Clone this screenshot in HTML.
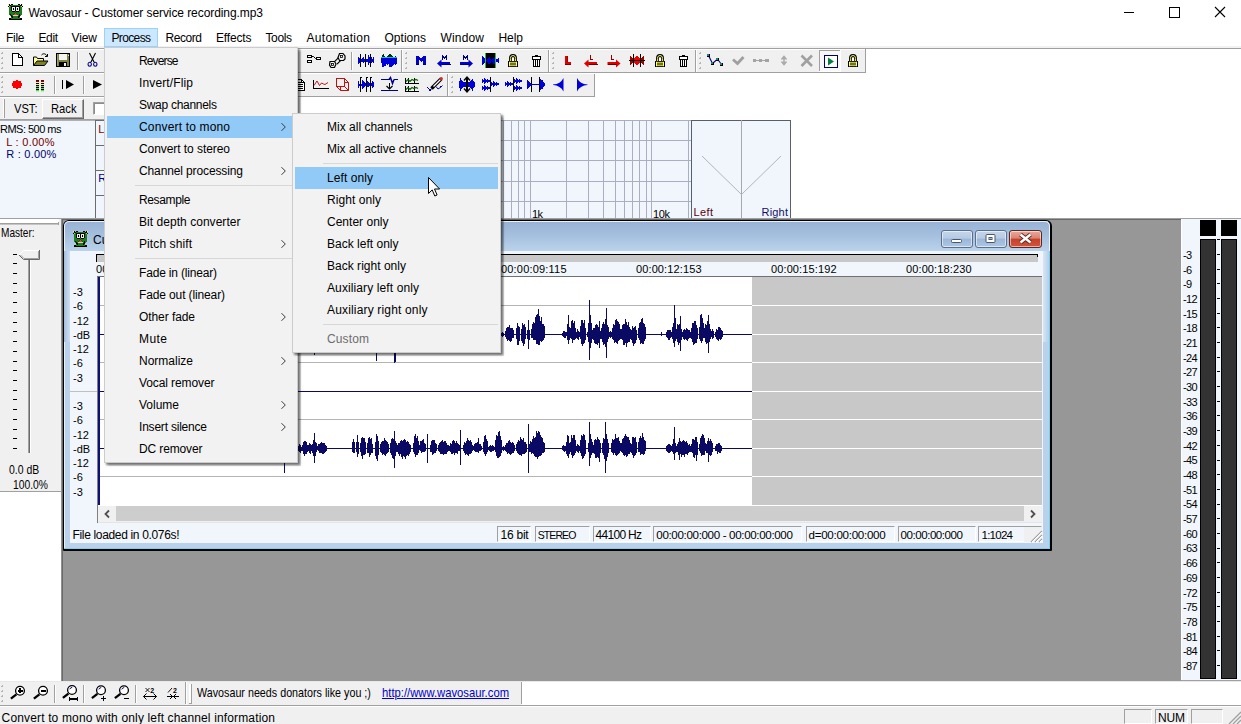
<!DOCTYPE html>
<html lang="en"><head><meta charset="utf-8"><title>Wavosaur - Customer service recording.mp3</title>
<style>
html,body{margin:0;padding:0;}
body{width:1241px;height:724px;overflow:hidden;background:#fff;position:relative;font-family:"Liberation Sans",sans-serif;}
#app{position:absolute;left:0;top:0;width:1241px;height:724px;overflow:hidden;background:#fff;}
#app div,#app span.t,#app svg{position:absolute;}
span.t{white-space:nowrap;line-height:20px;height:20px;display:block;}
svg{overflow:visible;}
.cr{shape-rendering:crispEdges;}
</style></head><body><div id="app">
<svg style="left:0px;top:0px" width="1241" height="49" viewBox="0 0 1241 49" ><g class="cr" transform="translate(8,4)"><rect x="0" y="0" width="1" height="1" fill="#f4f070"/><rect x="1" y="0" width="1" height="1" fill="#000"/><rect x="3" y="0" width="2" height="1" fill="#000"/><rect x="10" y="0" width="2" height="1" fill="#000"/><rect x="13" y="0" width="1" height="1" fill="#000"/><rect x="14" y="0" width="1" height="1" fill="#f4f070"/><rect x="1" y="1" width="2" height="1" fill="#000"/><rect x="3" y="1" width="9" height="1" fill="#1b7d1b"/><rect x="12" y="1" width="2" height="1" fill="#000"/><rect x="0" y="2" width="1" height="1" fill="#000"/><rect x="1" y="2" width="1" height="1" fill="#a0e040"/><rect x="2" y="2" width="1" height="1" fill="#1b7d1b"/><rect x="3" y="2" width="9" height="1" fill="#000"/><rect x="12" y="2" width="1" height="1" fill="#1b7d1b"/><rect x="13" y="2" width="1" height="1" fill="#a0e040"/><rect x="14" y="2" width="1" height="1" fill="#000"/><rect x="1" y="3" width="2" height="1" fill="#1b7d1b"/><rect x="3" y="3" width="1" height="1" fill="#000"/><rect x="4" y="3" width="3" height="1" fill="#e8f0e8"/><rect x="7" y="3" width="1" height="1" fill="#000"/><rect x="8" y="3" width="3" height="1" fill="#e8f0e8"/><rect x="11" y="3" width="1" height="1" fill="#000"/><rect x="12" y="3" width="2" height="1" fill="#1b7d1b"/><rect x="1" y="4" width="2" height="1" fill="#1b7d1b"/><rect x="3" y="4" width="1" height="1" fill="#000"/><rect x="4" y="4" width="1" height="1" fill="#e8f0e8"/><rect x="5" y="4" width="1" height="1" fill="#000"/><rect x="6" y="4" width="1" height="1" fill="#e8f0e8"/><rect x="7" y="4" width="1" height="1" fill="#000"/><rect x="8" y="4" width="1" height="1" fill="#e8f0e8"/><rect x="9" y="4" width="1" height="1" fill="#000"/><rect x="10" y="4" width="1" height="1" fill="#e8f0e8"/><rect x="11" y="4" width="1" height="1" fill="#000"/><rect x="12" y="4" width="2" height="1" fill="#1b7d1b"/><rect x="1" y="5" width="2" height="1" fill="#1b7d1b"/><rect x="3" y="5" width="1" height="1" fill="#000"/><rect x="4" y="5" width="1" height="1" fill="#e8f0e8"/><rect x="5" y="5" width="1" height="1" fill="#000"/><rect x="6" y="5" width="1" height="1" fill="#e8f0e8"/><rect x="7" y="5" width="1" height="1" fill="#000"/><rect x="8" y="5" width="1" height="1" fill="#e8f0e8"/><rect x="9" y="5" width="1" height="1" fill="#000"/><rect x="10" y="5" width="1" height="1" fill="#e8f0e8"/><rect x="11" y="5" width="1" height="1" fill="#000"/><rect x="12" y="5" width="2" height="1" fill="#1b7d1b"/><rect x="1" y="6" width="2" height="1" fill="#1b7d1b"/><rect x="3" y="6" width="1" height="1" fill="#000"/><rect x="4" y="6" width="3" height="1" fill="#e8f0e8"/><rect x="7" y="6" width="1" height="1" fill="#000"/><rect x="8" y="6" width="3" height="1" fill="#e8f0e8"/><rect x="11" y="6" width="1" height="1" fill="#000"/><rect x="12" y="6" width="2" height="1" fill="#1b7d1b"/><rect x="1" y="7" width="3" height="1" fill="#1b7d1b"/><rect x="4" y="7" width="3" height="1" fill="#000"/><rect x="7" y="7" width="1" height="1" fill="#1b7d1b"/><rect x="8" y="7" width="3" height="1" fill="#000"/><rect x="11" y="7" width="3" height="1" fill="#1b7d1b"/><rect x="1" y="8" width="6" height="1" fill="#1b7d1b"/><rect x="7" y="8" width="1" height="1" fill="#0f5f0f"/><rect x="8" y="8" width="6" height="1" fill="#1b7d1b"/><rect x="1" y="9" width="5" height="1" fill="#1b7d1b"/><rect x="6" y="9" width="1" height="1" fill="#0f5f0f"/><rect x="7" y="9" width="1" height="1" fill="#d05038"/><rect x="8" y="9" width="1" height="1" fill="#0f5f0f"/><rect x="9" y="9" width="5" height="1" fill="#1b7d1b"/><rect x="1" y="10" width="1" height="1" fill="#1b7d1b"/><rect x="2" y="10" width="1" height="1" fill="#000"/><rect x="3" y="10" width="2" height="1" fill="#1b7d1b"/><rect x="5" y="10" width="1" height="1" fill="#0f5f0f"/><rect x="6" y="10" width="3" height="1" fill="#d05038"/><rect x="9" y="10" width="1" height="1" fill="#0f5f0f"/><rect x="10" y="10" width="1" height="1" fill="#1b7d1b"/><rect x="11" y="10" width="1" height="1" fill="#000"/><rect x="12" y="10" width="2" height="1" fill="#1b7d1b"/><rect x="2" y="11" width="1" height="1" fill="#1b7d1b"/><rect x="3" y="11" width="1" height="1" fill="#000"/><rect x="4" y="11" width="1" height="1" fill="#1b7d1b"/><rect x="5" y="11" width="5" height="1" fill="#f0c4b4"/><rect x="10" y="11" width="1" height="1" fill="#1b7d1b"/><rect x="11" y="11" width="1" height="1" fill="#000"/><rect x="12" y="11" width="1" height="1" fill="#1b7d1b"/><rect x="3" y="12" width="2" height="1" fill="#000"/><rect x="5" y="12" width="5" height="1" fill="#1b7d1b"/><rect x="10" y="12" width="2" height="1" fill="#000"/><rect x="3" y="13" width="1" height="1" fill="#1b7d1b"/><rect x="4" y="13" width="1" height="1" fill="#000"/><rect x="5" y="13" width="5" height="1" fill="#1b7d1b"/><rect x="10" y="13" width="1" height="1" fill="#000"/><rect x="11" y="13" width="1" height="1" fill="#1b7d1b"/><rect x="1" y="14" width="2" height="1" fill="#000"/><rect x="3" y="14" width="9" height="1" fill="#1b7d1b"/><rect x="12" y="14" width="2" height="1" fill="#000"/><rect x="1" y="15" width="13" height="1" fill="#000"/></g></svg>
<span class="t " style="left:28.40px;top:2.54px;font-size:12px;letter-spacing:-0.076px;color:#000;">Wavosaur - Customer service recording.mp3</span>
<svg style="left:1100px;top:0px" width="141" height="30" viewBox="0 0 141 30" ><g class="cr" fill="none" stroke="#000" stroke-width="1"><path d="M24 12.5H34"/><rect x="69.5" y="7.5" width="10" height="10"/></g><path d="M115 7L125 17M125 7L115 17" stroke="#000" stroke-width="1.1" fill="none"/></svg>
<div style="left:0px;top:46px;width:1241px;height:2px;background:#f2f2f2;"></div>
<div style="left:104px;top:28px;width:54px;height:19px;background:#cce8ff;box-sizing:border-box;border:1px solid #99d1ff;"></div>
<span class="t " style="left:6.00px;top:28.04px;font-size:12px;letter-spacing:-0.279px;color:#000;">File</span>
<span class="t " style="left:38.50px;top:28.04px;font-size:12px;letter-spacing:-0.393px;color:#000;">Edit</span>
<span class="t " style="left:71.50px;top:28.04px;font-size:12px;letter-spacing:-0.098px;color:#000;">View</span>
<span class="t " style="left:111.50px;top:28.04px;font-size:12px;letter-spacing:-0.641px;color:#000;">Process</span>
<span class="t " style="left:165.50px;top:28.04px;font-size:12px;letter-spacing:-0.437px;color:#000;">Record</span>
<span class="t " style="left:216.00px;top:28.04px;font-size:12px;letter-spacing:-0.160px;color:#000;">Effects</span>
<span class="t " style="left:265.50px;top:28.04px;font-size:12px;letter-spacing:-0.378px;color:#000;">Tools</span>
<span class="t " style="left:306.50px;top:28.04px;font-size:12px;letter-spacing:0.311px;color:#000;">Automation</span>
<span class="t " style="left:384.50px;top:28.04px;font-size:12px;letter-spacing:0.024px;color:#000;">Options</span>
<span class="t " style="left:440.50px;top:28.04px;font-size:12px;letter-spacing:0.164px;color:#000;">Window</span>
<span class="t " style="left:498.50px;top:28.04px;font-size:12px;letter-spacing:-0.060px;color:#000;">Help</span>
<div style="left:0px;top:48px;width:1241px;height:1px;background:#a0a0a0;"></div>
<div style="left:0px;top:50px;width:866px;height:23px;background:#f0f0f0;"></div>
<div style="left:0px;top:72px;width:866px;height:1px;background:#a0a0a0;"></div>
<div style="left:865px;top:49px;width:1px;height:24px;background:#a0a0a0;"></div>
<div style="left:0px;top:73px;width:595px;height:24px;background:#f0f0f0;"></div>
<div style="left:0px;top:96px;width:595px;height:1px;background:#a0a0a0;"></div>
<div style="left:594px;top:73px;width:1px;height:24px;background:#a0a0a0;"></div>
<div style="left:0px;top:73px;width:595px;height:1px;background:#fff;"></div>
<div style="left:0px;top:97px;width:300px;height:23px;background:#f0f0f0;"></div>
<div style="left:0px;top:97px;width:300px;height:1px;background:#fff;"></div>
<div style="left:0px;top:119px;width:300px;height:1px;background:#a0a0a0;"></div>
<svg style="left:0px;top:0px" width="1241" height="124" viewBox="0 0 1241 124" ><rect x="2" y="52" width="1" height="1" fill="#b4b4b4"/><rect x="1" y="53" width="2" height="1" fill="#b4b4b4"/><rect x="2" y="57" width="1" height="1" fill="#b4b4b4"/><rect x="1" y="58" width="2" height="1" fill="#b4b4b4"/><rect x="2" y="62" width="1" height="1" fill="#b4b4b4"/><rect x="1" y="63" width="2" height="1" fill="#b4b4b4"/><rect x="2" y="67" width="1" height="1" fill="#b4b4b4"/><rect x="1" y="68" width="2" height="1" fill="#b4b4b4"/><rect x="406" y="52" width="1" height="1" fill="#b4b4b4"/><rect x="405" y="53" width="2" height="1" fill="#b4b4b4"/><rect x="406" y="57" width="1" height="1" fill="#b4b4b4"/><rect x="405" y="58" width="2" height="1" fill="#b4b4b4"/><rect x="406" y="62" width="1" height="1" fill="#b4b4b4"/><rect x="405" y="63" width="2" height="1" fill="#b4b4b4"/><rect x="406" y="67" width="1" height="1" fill="#b4b4b4"/><rect x="405" y="68" width="2" height="1" fill="#b4b4b4"/><rect x="553" y="52" width="1" height="1" fill="#b4b4b4"/><rect x="552" y="53" width="2" height="1" fill="#b4b4b4"/><rect x="553" y="57" width="1" height="1" fill="#b4b4b4"/><rect x="552" y="58" width="2" height="1" fill="#b4b4b4"/><rect x="553" y="62" width="1" height="1" fill="#b4b4b4"/><rect x="552" y="63" width="2" height="1" fill="#b4b4b4"/><rect x="553" y="67" width="1" height="1" fill="#b4b4b4"/><rect x="552" y="68" width="2" height="1" fill="#b4b4b4"/><rect x="700" y="52" width="1" height="1" fill="#b4b4b4"/><rect x="699" y="53" width="2" height="1" fill="#b4b4b4"/><rect x="700" y="57" width="1" height="1" fill="#b4b4b4"/><rect x="699" y="58" width="2" height="1" fill="#b4b4b4"/><rect x="700" y="62" width="1" height="1" fill="#b4b4b4"/><rect x="699" y="63" width="2" height="1" fill="#b4b4b4"/><rect x="700" y="67" width="1" height="1" fill="#b4b4b4"/><rect x="699" y="68" width="2" height="1" fill="#b4b4b4"/><rect x="2" y="76" width="1" height="1" fill="#b4b4b4"/><rect x="1" y="77" width="2" height="1" fill="#b4b4b4"/><rect x="2" y="81" width="1" height="1" fill="#b4b4b4"/><rect x="1" y="82" width="2" height="1" fill="#b4b4b4"/><rect x="2" y="86" width="1" height="1" fill="#b4b4b4"/><rect x="1" y="87" width="2" height="1" fill="#b4b4b4"/><rect x="2" y="91" width="1" height="1" fill="#b4b4b4"/><rect x="1" y="92" width="2" height="1" fill="#b4b4b4"/><rect x="452" y="76" width="1" height="1" fill="#b4b4b4"/><rect x="451" y="77" width="2" height="1" fill="#b4b4b4"/><rect x="452" y="81" width="1" height="1" fill="#b4b4b4"/><rect x="451" y="82" width="2" height="1" fill="#b4b4b4"/><rect x="452" y="86" width="1" height="1" fill="#b4b4b4"/><rect x="451" y="87" width="2" height="1" fill="#b4b4b4"/><rect x="452" y="91" width="1" height="1" fill="#b4b4b4"/><rect x="451" y="92" width="2" height="1" fill="#b4b4b4"/><rect x="77" y="52" width="1" height="18" fill="#a0a0a0"/><rect x="78" y="52" width="1" height="18" fill="#fff"/><rect x="351" y="52" width="1" height="18" fill="#a0a0a0"/><rect x="352" y="52" width="1" height="18" fill="#fff"/><rect x="401" y="50" width="1" height="22" fill="#a0a0a0"/><rect x="402" y="50" width="1" height="22" fill="#fff"/><rect x="548" y="50" width="1" height="22" fill="#a0a0a0"/><rect x="549" y="50" width="1" height="22" fill="#fff"/><rect x="695" y="50" width="1" height="22" fill="#a0a0a0"/><rect x="696" y="50" width="1" height="22" fill="#fff"/><rect x="54" y="76" width="1" height="18" fill="#a0a0a0"/><rect x="55" y="76" width="1" height="18" fill="#fff"/><rect x="83" y="76" width="1" height="18" fill="#a0a0a0"/><rect x="84" y="76" width="1" height="18" fill="#fff"/><rect x="447" y="74" width="1" height="22" fill="#a0a0a0"/><rect x="448" y="74" width="1" height="22" fill="#fff"/><path class="cr" d="M12.500 53.500h6l4 4v8h-10z" fill="#fff" stroke="#000"/><path class="cr" d="M18.500 53.500v4h4" fill="none" stroke="#000"/><path d="M33.500 65.500v-8.500h3l1 1.500h6v3" fill="#ffff99" stroke="#000"/><path d="M33.500 65.500l3.500-4.500h11l-3.500 4.500z" fill="#808020" stroke="#000"/><path d="M41.500 55c1.500-1.800 4.500-1.800 5.500 1.500" fill="none" stroke="#000"/><path d="M45 56.500h2.500v-2.500" fill="none" stroke="#000"/><g class="cr"><rect x="56.500" y="53.500" width="13" height="13" fill="#808040" stroke="#000"/><rect x="59" y="54" width="8" height="6" fill="#f4f4f4"/><rect x="59" y="62" width="8" height="4" fill="#000"/><rect x="64" y="63" width="2" height="3" fill="#f0f0f0"/><rect x="68" y="55" width="1" height="1" fill="#f0f0f0"/><rect x="57" y="54" width="1" height="12" fill="#a0a060"/></g><g fill="none"><path d="M89.500 53l4.500 9M95.500 53l-4.500 9" stroke="#000" stroke-width="1.100"/><ellipse cx="89.700" cy="64.300" rx="1.700" ry="2" stroke="#000090" stroke-width="1.100"/><ellipse cx="95.300" cy="64.300" rx="1.700" ry="2" stroke="#000090" stroke-width="1.100"/><path d="M91.200 61.500l-1 1.200M93.800 61.500l1 1.200" stroke="#000090"/></g><g class="cr" fill="#fff" stroke="#000"><rect x="307.500" y="55.500" width="4" height="2"/><rect x="307.500" y="60.500" width="4" height="2"/><rect x="316.500" y="57.500" width="4" height="2"/></g><path d="M312 56.500h1.500l2 2h1.500" stroke="#000" fill="none"/><g fill="#f0f0f0" stroke="#000" stroke-width="1.200"><path d="M334.800 61.300l4.200-4.200 M337 64.200l4.600-4.600" fill="none"/><path d="M330 61.500h4.500l1.500 2.500-1.500 3.500h-3.500l-1.500-2.500z"/><path d="M339.500 53.500h3.500l2 2.500v3l-1.500 1.500h-4l-1.500-3z"/></g><rect x="331.500" y="63.500" width="2" height="2" fill="none" stroke="#000" stroke-width="0.800"/><rect x="340.500" y="55.500" width="2" height="2" fill="none" stroke="#000" stroke-width="0.800"/><g class="cr" fill="#0000d8"><rect x="358" y="57" width="1" height="7"/><rect x="359" y="58" width="1" height="5"/><rect x="361" y="59" width="1" height="3"/><rect x="362" y="58" width="1" height="4"/><rect x="363" y="57" width="1" height="6"/><rect x="364" y="59" width="1" height="3"/><rect x="366" y="59" width="1" height="3"/><rect x="367" y="59" width="1" height="3"/><rect x="368" y="55" width="1" height="10"/><rect x="369" y="57" width="1" height="6"/><rect x="371" y="57" width="1" height="6"/><rect x="372" y="59" width="1" height="3"/><rect x="373" y="57" width="1" height="6"/></g><rect class="cr" x="360" y="54" width="1" height="13" fill="#000"/><rect class="cr" x="365" y="54" width="1" height="13" fill="#000"/><rect class="cr" x="370" y="54" width="1" height="13" fill="#000"/><g class="cr" fill="#0000d8"><rect x="381" y="58" width="1" height="5"/><rect x="382" y="58" width="1" height="9"/><rect x="383" y="58" width="1" height="9"/><rect x="384" y="58" width="1" height="8"/><rect x="385" y="58" width="1" height="8"/><rect x="386" y="58" width="1" height="6"/><rect x="387" y="58" width="1" height="7"/><rect x="388" y="58" width="1" height="6"/><rect x="389" y="58" width="1" height="9"/><rect x="390" y="58" width="1" height="9"/><rect x="391" y="58" width="1" height="9"/><rect x="392" y="58" width="1" height="8"/><rect x="393" y="58" width="1" height="7"/><rect x="394" y="58" width="1" height="6"/><rect x="395" y="58" width="1" height="7"/><rect x="396" y="58" width="1" height="6"/></g><rect class="cr" x="381" y="57" width="16" height="1" fill="#20b8e8"/><g class="cr" fill="#003000"><rect x="382" y="55" width="1" height="2"/><rect x="383" y="54" width="1" height="3"/><rect x="384" y="56" width="1" height="1"/><rect x="387" y="56" width="1" height="1"/><rect x="388" y="55" width="1" height="2"/><rect x="389" y="54" width="1" height="3"/><rect x="390" y="54" width="1" height="3"/><rect x="391" y="55" width="1" height="2"/><rect x="392" y="56" width="1" height="1"/><rect x="395" y="56" width="1" height="1"/></g><path class="cr" d="M416 65v-9h3l2 3 2-3h3v9h-3v-5l-2 2-2-2v5z" fill="#0000c8"/><rect class="cr" x="416" y="64" width="3" height="1" fill="#000070"/><rect class="cr" x="423" y="64" width="3" height="1" fill="#000070"/><path d="M437 63.500l4.500-4v2.500h8.500v3h-8.500v2.500z" fill="#0000d0"/><rect class="cr" x="441.5" y="64" width="9" height="1" fill="#000070"/><g class="cr" fill="#000090"><rect x="442" y="55" width="1" height="5"/><rect x="446" y="55" width="1" height="5"/><rect x="443" y="56" width="1" height="2"/><rect x="445" y="56" width="1" height="2"/><rect x="444" y="57" width="1" height="2"/></g><path d="M473 63.500l-4.500-4v2.500h-8.500v3h8.500v2.500z" fill="#0000d0"/><rect class="cr" x="460.5" y="64" width="9" height="1" fill="#000070"/><g class="cr" fill="#000090"><rect x="463" y="55" width="1" height="5"/><rect x="467" y="55" width="1" height="5"/><rect x="464" y="56" width="1" height="2"/><rect x="466" y="56" width="1" height="2"/><rect x="465" y="57" width="1" height="2"/></g><g class="cr"><path d="M482 55v11l3-4v-3z" fill="#0000d8"/><rect x="485" y="53" width="11" height="15" fill="#000"/><rect x="485" y="53" width="1" height="15" fill="#30c030"/><rect x="495" y="53" width="1" height="15" fill="#30c030"/><path d="M498.500 58v5l-2.500-1.500v-2z" fill="#0000d8"/></g><g class="cr" fill="#0000e8"><rect x="486" y="60" width="1" height="1"/><rect x="487" y="59" width="1" height="3"/><rect x="488" y="58" width="1" height="6"/><rect x="489" y="57" width="1" height="7"/><rect x="490" y="59" width="1" height="4"/><rect x="491" y="60" width="1" height="1"/><rect x="492" y="59" width="1" height="3"/><rect x="493" y="58" width="1" height="6"/><rect x="494" y="57" width="1" height="7"/></g><g><path d="M510.4 61.5v-3q0-3 2.600-3t2.600 3v3" fill="none" stroke="#000" stroke-width="2.800"/><path d="M510.4 61.5v-3q0-3 2.600-3t2.600 3v3" fill="none" stroke="#f4f468" stroke-width="1"/><rect x="512" y="58" width="2" height="3" fill="#fffff0"/><rect x="508" y="61" width="10" height="6" fill="#000"/><rect x="509" y="61.85" width="8" height="0.900" fill="#ffff66"/><rect x="509" y="63.55" width="8" height="0.900" fill="#ffff66"/><rect x="509" y="65.25" width="8" height="0.900" fill="#ffff66"/><rect x="509" y="61.85" width="1" height="4.300" fill="#ffff66"/><rect x="516" y="61.85" width="1" height="4.300" fill="#ffff66"/></g><g class="cr"><rect x="535" y="55" width="3" height="1" fill="#000"/><rect x="532" y="56" width="9" height="4" fill="#000"/><rect x="533" y="57" width="7" height="2" fill="#fff"/><rect x="533" y="60" width="7" height="7" fill="#000"/><rect x="534" y="60" width="1" height="6" fill="#fff"/><rect x="536" y="60" width="1" height="6" fill="#fff"/><rect x="538" y="60" width="1" height="6" fill="#fff"/></g><path class="cr" d="M565 56h3v6h3v3h-6z" fill="#e00000"/><rect class="cr" x="565" y="64" width="6" height="1" fill="#800000"/><rect class="cr" x="567" y="56" width="1" height="6" fill="#a00000"/><path d="M584 63.500l4.500-4v2.500h8.500v3h-8.500v2.500z" fill="#e00000"/><rect class="cr" x="588.5" y="64" width="9" height="1" fill="#700000"/><g class="cr" fill="#900000"><rect x="590" y="55" width="1" height="5"/><rect x="590" y="59" width="3" height="1"/></g><path d="M620.5 63.500l-4.500-4v2.500h-8.500v3h8.500v2.500z" fill="#e00000"/><rect class="cr" x="608" y="64" width="9" height="1" fill="#700000"/><g class="cr" fill="#900000"><rect x="611" y="55" width="1" height="5"/><rect x="611" y="59" width="3" height="1"/></g><g class="cr" fill="#a00000"><rect x="630" y="56" width="1" height="9"/><rect x="631" y="57" width="1" height="7"/><rect x="632" y="58" width="1" height="5"/><rect x="634" y="58" width="1" height="5"/><rect x="635" y="57" width="1" height="7"/><rect x="636" y="56" width="1" height="9"/><rect x="637" y="56" width="1" height="9"/><rect x="638" y="57" width="1" height="7"/><rect x="639" y="58" width="1" height="5"/><rect x="641" y="58" width="1" height="5"/><rect x="642" y="57" width="1" height="7"/><rect x="643" y="56" width="1" height="9"/></g><g class="cr" fill="#f00000"><rect x="634" y="58" width="1" height="5"/><rect x="635" y="57" width="1" height="7"/><rect x="636" y="56" width="1" height="9"/><rect x="637" y="56" width="1" height="9"/><rect x="638" y="57" width="1" height="7"/><rect x="639" y="58" width="1" height="5"/></g><rect class="cr" x="633" y="54" width="1" height="13" fill="#000"/><rect class="cr" x="640" y="54" width="1" height="13" fill="#000"/><rect class="cr" x="629" y="60" width="16" height="1" fill="#000"/><g><path d="M657.4 61.5v-3q0-3 2.600-3t2.600 3v3" fill="none" stroke="#000" stroke-width="2.800"/><path d="M657.4 61.5v-3q0-3 2.600-3t2.600 3v3" fill="none" stroke="#f4f468" stroke-width="1"/><rect x="659" y="58" width="2" height="3" fill="#fffff0"/><rect x="655" y="61" width="10" height="6" fill="#000"/><rect x="656" y="61.85" width="8" height="0.900" fill="#ffff66"/><rect x="656" y="63.55" width="8" height="0.900" fill="#ffff66"/><rect x="656" y="65.25" width="8" height="0.900" fill="#ffff66"/><rect x="656" y="61.85" width="1" height="4.300" fill="#ffff66"/><rect x="663" y="61.85" width="1" height="4.300" fill="#ffff66"/></g><g class="cr"><rect x="682" y="55" width="3" height="1" fill="#000"/><rect x="679" y="56" width="9" height="4" fill="#000"/><rect x="680" y="57" width="7" height="2" fill="#fff"/><rect x="680" y="60" width="7" height="7" fill="#000"/><rect x="681" y="60" width="1" height="6" fill="#fff"/><rect x="683" y="60" width="1" height="6" fill="#fff"/><rect x="685" y="60" width="1" height="6" fill="#fff"/></g><path d="M708.500 55.500l4 8 5-4.500 4 5.500" fill="none" stroke="#000080" stroke-width="1.100"/><g class="cr"><rect x="707" y="54" width="3" height="3" fill="#000"/><rect x="711" y="62" width="3" height="3" fill="#000"/><rect x="716" y="58" width="3" height="3" fill="#000"/><rect x="720" y="63" width="3" height="3" fill="#000"/><rect x="707" y="54" width="2" height="2" fill="#208080"/><rect x="711" y="62" width="2" height="2" fill="#208080"/><rect x="716" y="58" width="2" height="2" fill="#208080"/><rect x="720" y="63" width="2" height="2" fill="#208080"/></g><path d="M733 59.500l4.500 4 6-6.500" fill="none" stroke="#a0a0a0" stroke-width="2.800"/><g class="cr" fill="#a4a4a4"><rect x="753" y="60" width="16" height="1"/><rect x="753" y="59" width="3" height="3"/><rect x="759" y="59" width="3" height="3"/><rect x="765" y="59" width="4" height="3"/></g><path d="M784 57v7M781.500 59.500l2.500-3 2.500 3M781.500 61.500l2.500 3 2.500-3" fill="none" stroke="#a8a8a8" stroke-width="1.500"/><path d="M801.500 55.500l10.500 10.500M812 55.500l-10.500 10.500" fill="none" stroke="#a0a0a0" stroke-width="2.600"/><g class="cr"><rect x="819" y="50" width="22" height="22" fill="#f8f8f8"/><rect x="819" y="50" width="22" height="1" fill="#a0a0a0"/><rect x="819" y="50" width="1" height="22" fill="#a0a0a0"/><rect x="840" y="50" width="1" height="22" fill="#fff"/><rect x="819" y="71" width="22" height="1" fill="#fff"/><rect x="824.500" y="55.500" width="13" height="12" fill="#fff" stroke="#000070" stroke-width="1.600"/></g><path d="M828 57.500v8l6-4z" fill="#008040"/><g><path d="M850.4 61.5v-3q0-3 2.600-3t2.600 3v3" fill="none" stroke="#000" stroke-width="2.800"/><path d="M850.4 61.5v-3q0-3 2.600-3t2.600 3v3" fill="none" stroke="#f4f468" stroke-width="1"/><rect x="852" y="58" width="2" height="3" fill="#fffff0"/><rect x="848" y="61" width="10" height="6" fill="#000"/><rect x="849" y="61.85" width="8" height="0.900" fill="#ffff66"/><rect x="849" y="63.55" width="8" height="0.900" fill="#ffff66"/><rect x="849" y="65.25" width="8" height="0.900" fill="#ffff66"/><rect x="849" y="61.85" width="1" height="4.300" fill="#ffff66"/><rect x="856" y="61.85" width="1" height="4.300" fill="#ffff66"/></g><g class="cr" fill="#ff0000"><rect x="12" y="83" width="1" height="3"/><rect x="13" y="81" width="1" height="7"/><rect x="14" y="81" width="1" height="7"/><rect x="15" y="81" width="1" height="7"/><rect x="16" y="80" width="1" height="9"/><rect x="17" y="80" width="1" height="9"/><rect x="18" y="81" width="1" height="7"/><rect x="19" y="81" width="1" height="7"/><rect x="20" y="81" width="1" height="7"/><rect x="21" y="83" width="1" height="3"/></g><g class="cr"><rect x="36" y="80" width="3" height="1" fill="#600000"/><rect x="36" y="81" width="3" height="1" fill="#a00000"/><rect x="36" y="82" width="3" height="1" fill="#f8f080"/><rect x="36" y="83" width="3" height="1" fill="#000"/><rect x="36" y="84" width="3" height="1" fill="#f8f080"/><rect x="36" y="85" width="3" height="1" fill="#000"/><rect x="36" y="86" width="3" height="1" fill="#60d860"/><rect x="36" y="87" width="3" height="1" fill="#000"/><rect x="36" y="88" width="3" height="1" fill="#60d860"/><rect x="36" y="89" width="3" height="1" fill="#000"/><rect x="36" y="90" width="3" height="1" fill="#60d860"/><rect x="41" y="80" width="3" height="1" fill="#600000"/><rect x="41" y="81" width="3" height="1" fill="#a00000"/><rect x="41" y="82" width="3" height="1" fill="#f8f080"/><rect x="41" y="83" width="3" height="1" fill="#000"/><rect x="41" y="84" width="3" height="1" fill="#f8f080"/><rect x="41" y="85" width="3" height="1" fill="#000"/><rect x="41" y="86" width="3" height="1" fill="#60d860"/><rect x="41" y="87" width="3" height="1" fill="#000"/><rect x="41" y="88" width="3" height="1" fill="#60d860"/><rect x="41" y="89" width="3" height="1" fill="#000"/><rect x="41" y="90" width="3" height="1" fill="#60d860"/><rect x="36" y="91" width="3" height="1" fill="#b8f0b8"/><rect x="41" y="91" width="3" height="1" fill="#b8f0b8"/></g><rect class="cr" x="62" y="80" width="1" height="9" fill="#000"/><path d="M66 80v9l8-4.500z" fill="#000"/><path d="M93 80v9l9-4.500z" fill="#000"/><g class="cr"><path d="M295.500 79.500h6l3 3v8h-9z" fill="#fff" stroke="#000"/><path d="M301.500 79.500v3h3" fill="none" stroke="#000"/><rect class="cr" x="297" y="82" width="5" height="1" fill="#000"/><rect class="cr" x="297" y="84" width="6" height="1" fill="#000"/><rect class="cr" x="297" y="86" width="6" height="1" fill="#000"/><rect class="cr" x="297" y="88" width="6" height="1" fill="#000"/></g><rect class="cr" x="313" y="80" width="1" height="9" fill="#000"/><rect class="cr" x="313" y="88" width="16" height="1" fill="#000"/><path d="M314 85.500l3-4.500 2.500 4.500 2-2.500 2 1 1.500 .5 3-2" fill="none" stroke="#c00000" stroke-width="0.900"/><g fill="none" stroke="#c01010" stroke-width="1"><rect class="cr" x="336.500" y="78.500" width="8" height="8"/><path d="M344.500 78.500l4 4v8h-8l-4-4M344.500 86.500l4 4M340.500 90.500v-4M348.500 82.500h-4"/></g><g class="cr" fill="#0000d8"><rect x="358" y="81" width="1" height="7"/><rect x="359" y="84" width="1" height="2"/><rect x="361" y="84" width="1" height="2"/><rect x="362" y="80" width="1" height="9"/><rect x="363" y="81" width="1" height="7"/><rect x="364" y="82" width="1" height="5"/><rect x="365" y="83" width="1" height="3"/><rect x="367" y="81" width="1" height="6"/><rect x="368" y="82" width="1" height="5"/><rect x="369" y="83" width="1" height="3"/><rect x="371" y="83" width="1" height="3"/><rect x="372" y="81" width="1" height="7"/><rect x="373" y="82" width="1" height="5"/></g><rect class="cr" x="360" y="77" width="1" height="15" fill="#000"/><rect class="cr" x="366" y="77" width="1" height="15" fill="#000"/><rect class="cr" x="370" y="77" width="1" height="15" fill="#000"/><rect class="cr" x="361" y="77" width="1" height="1" fill="#000"/><rect class="cr" x="367" y="77" width="1" height="1" fill="#000"/><rect class="cr" x="371" y="77" width="1" height="1" fill="#000"/><rect class="cr" x="381" y="79" width="9" height="1" fill="#000090"/><rect class="cr" x="394" y="79" width="4" height="1" fill="#000090"/><rect class="cr" x="381" y="90" width="17" height="1" fill="#000090"/><rect class="cr" x="389" y="83" width="1" height="6" fill="#000"/><path d="M386.500 86l3 3 3-3" fill="none" stroke="#000" stroke-width="1.200"/><path d="M389 79.500l1.500-2 2 6 1.500-4" fill="none" stroke="#000090" stroke-width="1.500"/><rect class="cr" x="405" y="78" width="1" height="6" fill="#000"/><rect class="cr" x="405" y="83" width="14" height="1" fill="#000"/><rect class="cr" x="408" y="78" width="1" height="5" fill="#000"/><rect class="cr" x="414" y="78" width="1" height="5" fill="#000"/><path d="M406 81.5l2-2 2 2 2-2 2 1 2-1 2 1" fill="none" stroke="#006800" stroke-width="1.200"/><rect class="cr" x="405" y="86" width="1" height="6" fill="#000"/><rect class="cr" x="405" y="91" width="14" height="1" fill="#000"/><rect class="cr" x="408" y="86" width="1" height="5" fill="#000"/><rect class="cr" x="414" y="86" width="1" height="5" fill="#000"/><path d="M406 89.5l2-2 2 2 2-2 2 1 2-1 2 1" fill="none" stroke="#006800" stroke-width="1.200"/><path d="M431.500 88.500l9.500-9.500" stroke="#000" stroke-width="3.600" fill="none"/><path d="M433.500 86.500l7-7" stroke="#fff" stroke-width="1.300" fill="none"/><circle cx="441.200" cy="78.800" r="1.700" fill="#c83030"/><path d="M427 87l3 3 2-1.500M436 86.500l2 2.500 3-2 1.500-1.500" fill="none" stroke="#0000a0" stroke-width="1"/><rect class="cr" x="429" y="89" width="2" height="2" fill="#0000a0"/><rect class="cr" x="440" y="86" width="2" height="1" fill="#0000a0"/><g class="cr" fill="#0000d8"><rect x="459" y="81" width="1" height="7"/><rect x="460" y="78" width="1" height="13"/><rect x="461" y="80" width="1" height="9"/><rect x="462" y="81" width="1" height="7"/><rect x="463" y="82" width="1" height="5"/><rect x="464" y="82" width="1" height="5"/><rect x="465" y="82" width="1" height="5"/><rect x="468" y="82" width="1" height="5"/><rect x="469" y="82" width="1" height="5"/><rect x="470" y="81" width="1" height="7"/><rect x="471" y="80" width="1" height="9"/><rect x="472" y="79" width="1" height="12"/><rect x="473" y="81" width="1" height="7"/><rect x="474" y="82" width="1" height="5"/></g><rect class="cr" x="466" y="77" width="2" height="15" fill="#000"/><path d="M464 80.500l3-3.500 3 3.500M464 88.500l3 3.500 3-3.500" fill="none" stroke="#000" stroke-width="1.400"/><g class="cr" fill="#0000d8"><rect x="482" y="79" width="1" height="4"/><rect x="483" y="80" width="1" height="2"/><rect x="484" y="78" width="1" height="6"/><rect x="485" y="79" width="1" height="4"/><rect x="486" y="80" width="1" height="2"/><rect x="487" y="79" width="1" height="4"/><rect x="488" y="80" width="1" height="2"/><rect x="489" y="80" width="1" height="2"/></g><g class="cr" fill="#0000d8"><rect x="482" y="86" width="1" height="4"/><rect x="483" y="87" width="1" height="2"/><rect x="484" y="85" width="1" height="6"/><rect x="485" y="86" width="1" height="4"/><rect x="486" y="87" width="1" height="2"/><rect x="487" y="86" width="1" height="4"/><rect x="488" y="87" width="1" height="2"/><rect x="489" y="87" width="1" height="2"/></g><g class="cr" fill="#0000d8"><rect x="491" y="82" width="1" height="4"/><rect x="492" y="83" width="1" height="2"/><rect x="493" y="81" width="1" height="6"/><rect x="494" y="82" width="1" height="4"/><rect x="495" y="83" width="1" height="2"/><rect x="496" y="82" width="1" height="4"/><rect x="497" y="83" width="1" height="2"/><rect x="498" y="83" width="1" height="2"/></g><rect class="cr" x="490" y="77" width="1" height="15" fill="#000"/><g class="cr" fill="#0000d8"><rect x="505" y="82" width="1" height="4"/><rect x="506" y="83" width="1" height="2"/><rect x="507" y="81" width="1" height="6"/><rect x="508" y="82" width="1" height="4"/><rect x="509" y="83" width="1" height="2"/><rect x="510" y="82" width="1" height="4"/><rect x="511" y="83" width="1" height="2"/><rect x="512" y="83" width="1" height="2"/></g><g class="cr" fill="#0000d8"><rect x="514" y="79" width="1" height="4"/><rect x="515" y="80" width="1" height="2"/><rect x="516" y="78" width="1" height="6"/><rect x="517" y="79" width="1" height="4"/><rect x="518" y="80" width="1" height="2"/><rect x="519" y="79" width="1" height="4"/><rect x="520" y="80" width="1" height="2"/><rect x="521" y="80" width="1" height="2"/></g><g class="cr" fill="#0000d8"><rect x="514" y="86" width="1" height="4"/><rect x="515" y="87" width="1" height="2"/><rect x="516" y="85" width="1" height="6"/><rect x="517" y="86" width="1" height="4"/><rect x="518" y="87" width="1" height="2"/><rect x="519" y="86" width="1" height="4"/><rect x="520" y="87" width="1" height="2"/><rect x="521" y="87" width="1" height="2"/></g><rect class="cr" x="513" y="77" width="1" height="15" fill="#000"/><rect class="cr" x="531" y="77" width="1" height="15" fill="#000"/><rect class="cr" x="539" y="77" width="1" height="15" fill="#000"/><rect class="cr" x="531" y="84" width="9" height="1" fill="#0000c0"/><g class="cr" fill="#0000d8"><rect x="527" y="80" width="1" height="9"/><rect x="528" y="81" width="1" height="7"/><rect x="529" y="82" width="1" height="5"/><rect x="530" y="83" width="1" height="3"/></g><g class="cr" fill="#0000d8"><rect x="540" y="79" width="1" height="11"/><rect x="541" y="80" width="1" height="9"/><rect x="542" y="80" width="1" height="9"/><rect x="543" y="82" width="1" height="5"/><rect x="544" y="83" width="1" height="3"/></g><path d="M563.500 78v13.500q-3-6-10.500-6.500v-.500q7.500-.500 10.500-6.500z" fill="#0000d8"/><path d="M577 78v13.500q3-6 10.500-6.500v-.500q-7.500-.500-10.500-6.500z" fill="#0000d8"/></svg>
<span class="t" style="left:14.00px;top:99.24px;font-size:12.57px;color:#000;transform:scaleX(0.8853);transform-origin:0 0;">VST:</span>
<div style="left:42px;top:99px;width:42px;height:20px;background:#f0f0f0;box-sizing:border-box;border:1px solid;border-color:#fff #696969 #696969 #fff;box-shadow:inset -1px -1px 0 #a0a0a0;"></div>
<span class="t" style="left:50.50px;top:99.24px;font-size:12.57px;color:#000;transform:scaleX(0.8904);transform-origin:0 0;">Rack</span>
<div style="left:93px;top:102px;width:13px;height:13px;background:#fff;box-sizing:border-box;border:1px solid;border-color:#a0a0a0 #fff #fff #a0a0a0;box-shadow:inset 1px 1px 0 #8c8c8c;"></div>
<div style="left:3px;top:99px;width:1px;height:19px;background:#fff;"></div>
<div style="left:4px;top:99px;width:1px;height:19px;background:#a0a0a0;"></div>
<div style="left:0px;top:120px;width:95px;height:98px;background:#f0f6fb;"></div>
<div style="left:0px;top:120px;width:96px;height:1px;background:#b0b0b0;"></div>
<div style="left:95px;top:120px;width:1px;height:98px;background:#6c6c6c;"></div>
<span class="t " style="left:0.00px;top:118.99px;font-size:11px;letter-spacing:-0.513px;color:#000;">RMS: 500 ms</span>
<span class="t " style="left:6.30px;top:132.19px;font-size:11px;letter-spacing:0.267px;color:#700000;">L : 0.00%</span>
<span class="t " style="left:6.30px;top:144.29px;font-size:11px;letter-spacing:0.225px;color:#000070;">R : 0.00%</span>
<div style="left:96px;top:120px;width:595px;height:98px;background:#f0f6fb;"></div>
<svg style="left:0px;top:0px" width="1241" height="230" viewBox="0 0 1241 230" ><g class="cr" fill="#a9afc0"><rect x="300" y="120" width="391" height="1"/><rect x="300" y="140" width="391" height="1"/><rect x="300" y="160" width="391" height="1"/><rect x="300" y="181" width="391" height="1"/><rect x="300" y="201" width="391" height="1"/><rect x="382" y="120" width="1" height="98"/><rect x="390" y="120" width="1" height="98"/><rect x="397" y="120" width="1" height="98"/><rect x="403" y="120" width="1" height="98"/><rect x="409" y="120" width="1" height="98"/><rect x="445" y="120" width="1" height="98"/><rect x="467" y="120" width="1" height="98"/><rect x="482" y="120" width="1" height="98"/><rect x="494" y="120" width="1" height="98"/><rect x="503" y="120" width="1" height="98"/><rect x="511" y="120" width="1" height="98"/><rect x="518" y="120" width="1" height="98"/><rect x="524" y="120" width="1" height="98"/><rect x="530" y="120" width="1" height="98"/><rect x="566" y="120" width="1" height="98"/><rect x="588" y="120" width="1" height="98"/><rect x="603" y="120" width="1" height="98"/><rect x="615" y="120" width="1" height="98"/><rect x="624" y="120" width="1" height="98"/><rect x="632" y="120" width="1" height="98"/><rect x="639" y="120" width="1" height="98"/><rect x="646" y="120" width="1" height="98"/><rect x="651" y="120" width="1" height="98"/><rect x="688" y="120" width="1" height="98"/></g></svg>
<div style="left:96px;top:145px;width:204px;height:1px;background:#6c6c6c;"></div>
<div style="left:96px;top:170px;width:204px;height:1px;background:#6c6c6c;"></div>
<div style="left:96px;top:195px;width:204px;height:1px;background:#6c6c6c;"></div>
<div style="left:96px;top:120px;width:204px;height:1px;background:#6c6c6c;"></div>
<span class="t " style="left:98.30px;top:118.99px;font-size:11px;color:#800000;">L</span>
<span class="t " style="left:98.30px;top:168.49px;font-size:11px;color:#000080;">R</span>
<span class="t " style="left:532.00px;top:203.69px;font-size:11px;letter-spacing:-0.618px;color:#000;">1k</span>
<span class="t " style="left:653.00px;top:203.69px;font-size:11px;letter-spacing:-0.368px;color:#000;">10k</span>
<div style="left:691px;top:120px;width:100px;height:98px;background:#f0f6fb;box-sizing:border-box;border:1px solid #5a5e6a;border-bottom:none;"></div>
<svg style="left:691px;top:120px" width="100" height="98" viewBox="0 0 100 98" ><rect class="cr" x="50" y="0" width="1" height="98" fill="#a8a8b0"/><path d="M11 36L50.500 74.500L90 36" fill="none" stroke="#b4b4bc" stroke-width="1"/></svg>
<span class="t " style="left:693.50px;top:201.69px;font-size:11px;letter-spacing:0.384px;color:#5a0010;">Left</span>
<span class="t " style="left:761.50px;top:201.69px;font-size:11px;letter-spacing:0.205px;color:#10106a;">Right</span>
<div style="left:0px;top:218px;width:62px;height:274px;background:#f0f0f0;"></div>
<div style="left:0px;top:218px;width:1241px;height:1px;background:#a0a0a0;"></div>
<div style="left:0px;top:491px;width:61px;height:1px;background:#a0a0a0;"></div>
<div style="left:0px;top:219px;width:59px;height:4px;background:#fff;"></div>
<div style="left:59px;top:219px;width:2px;height:5px;background:#f0f0f0;"></div>
<div style="left:0px;top:223px;width:59px;height:1px;background:#a0a0a0;"></div>
<div style="left:0px;top:224px;width:59px;height:1px;background:#c4c4c4;"></div>
<div style="left:58px;top:222px;width:1px;height:3px;background:#a0a0a0;"></div>
<span class="t" style="left:0.70px;top:222.94px;font-size:12.57px;color:#000;transform:scaleX(0.8018);transform-origin:0 0;">Master:</span>
<svg style="left:0px;top:0px" width="70" height="500" viewBox="0 0 70 500" ><g class="cr"><rect x="13" y="254" width="4" height="1" fill="#000"/><rect x="13" y="263" width="4" height="1" fill="#000"/><rect x="13" y="273" width="4" height="1" fill="#000"/><rect x="13" y="283" width="4" height="1" fill="#000"/><rect x="13" y="292" width="4" height="1" fill="#000"/><rect x="13" y="302" width="4" height="1" fill="#000"/><rect x="13" y="312" width="4" height="1" fill="#000"/><rect x="13" y="322" width="4" height="1" fill="#000"/><rect x="13" y="331" width="4" height="1" fill="#000"/><rect x="13" y="341" width="4" height="1" fill="#000"/><rect x="13" y="351" width="4" height="1" fill="#000"/><rect x="13" y="361" width="4" height="1" fill="#000"/><rect x="13" y="370" width="4" height="1" fill="#000"/><rect x="13" y="380" width="4" height="1" fill="#000"/><rect x="13" y="390" width="4" height="1" fill="#000"/><rect x="13" y="399" width="4" height="1" fill="#000"/><rect x="13" y="409" width="4" height="1" fill="#000"/><rect x="13" y="419" width="4" height="1" fill="#000"/><rect x="13" y="429" width="4" height="1" fill="#000"/><rect x="13" y="438" width="4" height="1" fill="#000"/><rect x="13" y="448" width="4" height="1" fill="#000"/><rect x="28" y="258" width="1" height="195" fill="#a0a0a0"/><rect x="29" y="258" width="1" height="195" fill="#696969"/><rect x="30" y="258" width="1" height="195" fill="#fff"/></g><path d="M23.500 250.500h16v9h-16l-4.500-4.500z" fill="#f0f0f0" stroke="none"/><path d="M19 255l4.500-4.500h15.500" fill="none" stroke="#fff" stroke-width="1"/><path d="M19 255l4.500 4.500h16v-9.500" fill="none" stroke="#696969" stroke-width="1"/><path d="M20.500 255l3.500 3.500h14.500v-7.500" fill="none" stroke="#a0a0a0" stroke-width="1"/></svg>
<span class="t" style="left:9.30px;top:459.94px;font-size:12.57px;color:#000;transform:scaleX(0.8310);transform-origin:0 0;">0.0 dB</span>
<span class="t" style="left:12.50px;top:475.24px;font-size:12.57px;color:#000;transform:scaleX(0.8210);transform-origin:0 0;">100.0%</span>
<div style="left:61px;top:218px;width:1120px;height:463px;background:#979797;"></div>
<div style="left:61px;top:218px;width:1120px;height:1px;background:#a0a0a0;"></div>
<div style="left:61px;top:219px;width:1120px;height:1px;background:#696969;"></div>
<div style="left:61px;top:219px;width:1px;height:462px;background:#909090;"></div>
<div style="left:62px;top:220px;width:1px;height:461px;background:#696969;"></div>
<div style="left:1181px;top:218px;width:60px;height:463px;background:#f0f6fb;"></div>
<div style="left:1181px;top:218px;width:60px;height:1px;background:#a0a0a0;"></div>
<div style="left:1181px;top:219px;width:1px;height:461px;background:#fff;"></div>
<div style="left:1181px;top:680px;width:60px;height:1px;background:#a0a0a0;"></div>
<svg style="left:0px;top:0px" width="1241" height="700" viewBox="0 0 1241 700" ><g class="cr"><rect x="1200" y="220" width="16" height="16" fill="#000"/><rect x="1200" y="239" width="16" height="440" fill="#000"/><rect x="1201" y="240" width="14" height="438" fill="#333"/><rect x="1221" y="220" width="16" height="16" fill="#000"/><rect x="1221" y="239" width="16" height="440" fill="#000"/><rect x="1222" y="240" width="14" height="438" fill="#333"/><rect x="1217" y="239" width="3" height="1" fill="#000"/><rect x="1217" y="254" width="3" height="1" fill="#000"/><rect x="1217" y="269" width="3" height="1" fill="#000"/><rect x="1217" y="283" width="3" height="1" fill="#000"/><rect x="1217" y="298" width="3" height="1" fill="#000"/><rect x="1217" y="313" width="3" height="1" fill="#000"/><rect x="1217" y="327" width="3" height="1" fill="#000"/><rect x="1217" y="342" width="3" height="1" fill="#000"/><rect x="1217" y="357" width="3" height="1" fill="#000"/><rect x="1217" y="371" width="3" height="1" fill="#000"/><rect x="1217" y="386" width="3" height="1" fill="#000"/><rect x="1217" y="401" width="3" height="1" fill="#000"/><rect x="1217" y="415" width="3" height="1" fill="#000"/><rect x="1217" y="430" width="3" height="1" fill="#000"/><rect x="1217" y="445" width="3" height="1" fill="#000"/><rect x="1217" y="460" width="3" height="1" fill="#000"/><rect x="1217" y="474" width="3" height="1" fill="#000"/><rect x="1217" y="489" width="3" height="1" fill="#000"/><rect x="1217" y="504" width="3" height="1" fill="#000"/><rect x="1217" y="518" width="3" height="1" fill="#000"/><rect x="1217" y="533" width="3" height="1" fill="#000"/><rect x="1217" y="548" width="3" height="1" fill="#000"/><rect x="1217" y="562" width="3" height="1" fill="#000"/><rect x="1217" y="577" width="3" height="1" fill="#000"/><rect x="1217" y="592" width="3" height="1" fill="#000"/><rect x="1217" y="606" width="3" height="1" fill="#000"/><rect x="1217" y="621" width="3" height="1" fill="#000"/><rect x="1217" y="636" width="3" height="1" fill="#000"/><rect x="1217" y="650" width="3" height="1" fill="#000"/><rect x="1217" y="665" width="3" height="1" fill="#000"/></g></svg>
<span class="t " style="left:1183.00px;top:244.89px;font-size:11px;letter-spacing:-0.581px;color:#000;">-3</span>
<span class="t " style="left:1183.00px;top:259.57px;font-size:11px;letter-spacing:-0.581px;color:#000;">-6</span>
<span class="t " style="left:1183.00px;top:274.25px;font-size:11px;letter-spacing:-0.581px;color:#000;">-9</span>
<span class="t " style="left:1183.00px;top:288.93px;font-size:11px;letter-spacing:-0.599px;color:#000;">-12</span>
<span class="t " style="left:1183.00px;top:303.61px;font-size:11px;letter-spacing:-0.599px;color:#000;">-15</span>
<span class="t " style="left:1183.00px;top:318.29px;font-size:11px;letter-spacing:-0.599px;color:#000;">-18</span>
<span class="t " style="left:1183.00px;top:332.97px;font-size:11px;letter-spacing:-0.599px;color:#000;">-21</span>
<span class="t " style="left:1183.00px;top:347.65px;font-size:11px;letter-spacing:-0.599px;color:#000;">-24</span>
<span class="t " style="left:1183.00px;top:362.33px;font-size:11px;letter-spacing:-0.599px;color:#000;">-27</span>
<span class="t " style="left:1183.00px;top:377.01px;font-size:11px;letter-spacing:-0.599px;color:#000;">-30</span>
<span class="t " style="left:1183.00px;top:391.69px;font-size:11px;letter-spacing:-0.599px;color:#000;">-33</span>
<span class="t " style="left:1183.00px;top:406.37px;font-size:11px;letter-spacing:-0.599px;color:#000;">-36</span>
<span class="t " style="left:1183.00px;top:421.05px;font-size:11px;letter-spacing:-0.599px;color:#000;">-39</span>
<span class="t " style="left:1183.00px;top:435.73px;font-size:11px;letter-spacing:-0.599px;color:#000;">-42</span>
<span class="t " style="left:1183.00px;top:450.41px;font-size:11px;letter-spacing:-0.599px;color:#000;">-45</span>
<span class="t " style="left:1183.00px;top:465.09px;font-size:11px;letter-spacing:-0.599px;color:#000;">-48</span>
<span class="t " style="left:1183.00px;top:479.77px;font-size:11px;letter-spacing:-0.599px;color:#000;">-51</span>
<span class="t " style="left:1183.00px;top:494.45px;font-size:11px;letter-spacing:-0.599px;color:#000;">-54</span>
<span class="t " style="left:1183.00px;top:509.13px;font-size:11px;letter-spacing:-0.599px;color:#000;">-57</span>
<span class="t " style="left:1183.00px;top:523.81px;font-size:11px;letter-spacing:-0.599px;color:#000;">-60</span>
<span class="t " style="left:1183.00px;top:538.49px;font-size:11px;letter-spacing:-0.599px;color:#000;">-63</span>
<span class="t " style="left:1183.00px;top:553.17px;font-size:11px;letter-spacing:-0.599px;color:#000;">-66</span>
<span class="t " style="left:1183.00px;top:567.85px;font-size:11px;letter-spacing:-0.599px;color:#000;">-69</span>
<span class="t " style="left:1183.00px;top:582.53px;font-size:11px;letter-spacing:-0.599px;color:#000;">-72</span>
<span class="t " style="left:1183.00px;top:597.21px;font-size:11px;letter-spacing:-0.599px;color:#000;">-75</span>
<span class="t " style="left:1183.00px;top:611.89px;font-size:11px;letter-spacing:-0.599px;color:#000;">-78</span>
<span class="t " style="left:1183.00px;top:626.57px;font-size:11px;letter-spacing:-0.599px;color:#000;">-81</span>
<span class="t " style="left:1183.00px;top:641.25px;font-size:11px;letter-spacing:-0.599px;color:#000;">-84</span>
<span class="t " style="left:1183.00px;top:655.93px;font-size:11px;letter-spacing:-0.599px;color:#000;">-87</span>
<div style="left:63px;top:220px;width:989px;height:331px;box-sizing:border-box;border:1px solid #000;border-right-width:2px;border-bottom-width:2px;border-radius:6px 6px 1px 1px;background:#b9d1ea;overflow:hidden;"><div style="left:0;top:0;width:986px;height:31px;background:linear-gradient(#98b2d5,#a6c0df 50%,#bcd4ec 100%);"></div><div style="left:0;top:0;width:984px;height:326px;border:1px solid #e9f1fa;border-radius:5px 5px 0 0;box-sizing:content-box;"></div><div style="left:0px;top:327px;width:986px;height:1px;background:#6fd4f4;"></div><div style="left:985px;top:30px;width:1px;height:298px;background:#6fd4f4;"></div></div>
<div style="left:64px;top:251px;width:6px;height:91px;background:linear-gradient(to right,#a6bfdd,#cfdff1);"></div>
<div style="left:1043px;top:251px;width:6px;height:91px;background:linear-gradient(to right,#d8e6f4,#b6cee8);"></div>
<svg style="left:73px;top:230px" width="16" height="17" viewBox="0 0 16 17" ><g class="cr" transform="translate(0,0.5)"><rect x="0" y="0" width="1" height="1" fill="#f4f070"/><rect x="1" y="0" width="1" height="1" fill="#000"/><rect x="3" y="0" width="2" height="1" fill="#000"/><rect x="10" y="0" width="2" height="1" fill="#000"/><rect x="13" y="0" width="1" height="1" fill="#000"/><rect x="14" y="0" width="1" height="1" fill="#f4f070"/><rect x="1" y="1" width="2" height="1" fill="#000"/><rect x="3" y="1" width="9" height="1" fill="#1b7d1b"/><rect x="12" y="1" width="2" height="1" fill="#000"/><rect x="0" y="2" width="1" height="1" fill="#000"/><rect x="1" y="2" width="1" height="1" fill="#a0e040"/><rect x="2" y="2" width="1" height="1" fill="#1b7d1b"/><rect x="3" y="2" width="9" height="1" fill="#000"/><rect x="12" y="2" width="1" height="1" fill="#1b7d1b"/><rect x="13" y="2" width="1" height="1" fill="#a0e040"/><rect x="14" y="2" width="1" height="1" fill="#000"/><rect x="1" y="3" width="2" height="1" fill="#1b7d1b"/><rect x="3" y="3" width="1" height="1" fill="#000"/><rect x="4" y="3" width="3" height="1" fill="#e8f0e8"/><rect x="7" y="3" width="1" height="1" fill="#000"/><rect x="8" y="3" width="3" height="1" fill="#e8f0e8"/><rect x="11" y="3" width="1" height="1" fill="#000"/><rect x="12" y="3" width="2" height="1" fill="#1b7d1b"/><rect x="1" y="4" width="2" height="1" fill="#1b7d1b"/><rect x="3" y="4" width="1" height="1" fill="#000"/><rect x="4" y="4" width="1" height="1" fill="#e8f0e8"/><rect x="5" y="4" width="1" height="1" fill="#000"/><rect x="6" y="4" width="1" height="1" fill="#e8f0e8"/><rect x="7" y="4" width="1" height="1" fill="#000"/><rect x="8" y="4" width="1" height="1" fill="#e8f0e8"/><rect x="9" y="4" width="1" height="1" fill="#000"/><rect x="10" y="4" width="1" height="1" fill="#e8f0e8"/><rect x="11" y="4" width="1" height="1" fill="#000"/><rect x="12" y="4" width="2" height="1" fill="#1b7d1b"/><rect x="1" y="5" width="2" height="1" fill="#1b7d1b"/><rect x="3" y="5" width="1" height="1" fill="#000"/><rect x="4" y="5" width="1" height="1" fill="#e8f0e8"/><rect x="5" y="5" width="1" height="1" fill="#000"/><rect x="6" y="5" width="1" height="1" fill="#e8f0e8"/><rect x="7" y="5" width="1" height="1" fill="#000"/><rect x="8" y="5" width="1" height="1" fill="#e8f0e8"/><rect x="9" y="5" width="1" height="1" fill="#000"/><rect x="10" y="5" width="1" height="1" fill="#e8f0e8"/><rect x="11" y="5" width="1" height="1" fill="#000"/><rect x="12" y="5" width="2" height="1" fill="#1b7d1b"/><rect x="1" y="6" width="2" height="1" fill="#1b7d1b"/><rect x="3" y="6" width="1" height="1" fill="#000"/><rect x="4" y="6" width="3" height="1" fill="#e8f0e8"/><rect x="7" y="6" width="1" height="1" fill="#000"/><rect x="8" y="6" width="3" height="1" fill="#e8f0e8"/><rect x="11" y="6" width="1" height="1" fill="#000"/><rect x="12" y="6" width="2" height="1" fill="#1b7d1b"/><rect x="1" y="7" width="3" height="1" fill="#1b7d1b"/><rect x="4" y="7" width="3" height="1" fill="#000"/><rect x="7" y="7" width="1" height="1" fill="#1b7d1b"/><rect x="8" y="7" width="3" height="1" fill="#000"/><rect x="11" y="7" width="3" height="1" fill="#1b7d1b"/><rect x="1" y="8" width="6" height="1" fill="#1b7d1b"/><rect x="7" y="8" width="1" height="1" fill="#0f5f0f"/><rect x="8" y="8" width="6" height="1" fill="#1b7d1b"/><rect x="1" y="9" width="5" height="1" fill="#1b7d1b"/><rect x="6" y="9" width="1" height="1" fill="#0f5f0f"/><rect x="7" y="9" width="1" height="1" fill="#d05038"/><rect x="8" y="9" width="1" height="1" fill="#0f5f0f"/><rect x="9" y="9" width="5" height="1" fill="#1b7d1b"/><rect x="1" y="10" width="1" height="1" fill="#1b7d1b"/><rect x="2" y="10" width="1" height="1" fill="#000"/><rect x="3" y="10" width="2" height="1" fill="#1b7d1b"/><rect x="5" y="10" width="1" height="1" fill="#0f5f0f"/><rect x="6" y="10" width="3" height="1" fill="#d05038"/><rect x="9" y="10" width="1" height="1" fill="#0f5f0f"/><rect x="10" y="10" width="1" height="1" fill="#1b7d1b"/><rect x="11" y="10" width="1" height="1" fill="#000"/><rect x="12" y="10" width="2" height="1" fill="#1b7d1b"/><rect x="2" y="11" width="1" height="1" fill="#1b7d1b"/><rect x="3" y="11" width="1" height="1" fill="#000"/><rect x="4" y="11" width="1" height="1" fill="#1b7d1b"/><rect x="5" y="11" width="5" height="1" fill="#f0c4b4"/><rect x="10" y="11" width="1" height="1" fill="#1b7d1b"/><rect x="11" y="11" width="1" height="1" fill="#000"/><rect x="12" y="11" width="1" height="1" fill="#1b7d1b"/><rect x="3" y="12" width="2" height="1" fill="#000"/><rect x="5" y="12" width="5" height="1" fill="#1b7d1b"/><rect x="10" y="12" width="2" height="1" fill="#000"/><rect x="3" y="13" width="1" height="1" fill="#1b7d1b"/><rect x="4" y="13" width="1" height="1" fill="#000"/><rect x="5" y="13" width="5" height="1" fill="#1b7d1b"/><rect x="10" y="13" width="1" height="1" fill="#000"/><rect x="11" y="13" width="1" height="1" fill="#1b7d1b"/><rect x="1" y="14" width="2" height="1" fill="#000"/><rect x="3" y="14" width="9" height="1" fill="#1b7d1b"/><rect x="12" y="14" width="2" height="1" fill="#000"/><rect x="1" y="15" width="13" height="1" fill="#000"/></g></svg>
<span class="t " style="left:93.00px;top:229.84px;font-size:12px;color:#000;">Cu</span>
<div style="left:941px;top:230px;width:32px;height:18px;box-sizing:border-box;border:1px solid #5a6f8c;border-radius:3px;background:linear-gradient(#c5d6ea 0%,#b5cbe4 45%,#9bb7d8 50%,#adc6e2 100%);box-shadow:inset 0 0 0 1px rgba(255,255,255,.55);"></div>
<div style="left:975px;top:230px;width:32px;height:18px;box-sizing:border-box;border:1px solid #5a6f8c;border-radius:3px;background:linear-gradient(#c5d6ea 0%,#b5cbe4 45%,#9bb7d8 50%,#adc6e2 100%);box-shadow:inset 0 0 0 1px rgba(255,255,255,.55);"></div>
<div style="left:1009px;top:230px;width:33px;height:18px;box-sizing:border-box;border:1px solid #5e2820;border-radius:3px;background:linear-gradient(#e9a99c 0%,#dd8272 45%,#c8402a 50%,#d0553f 100%);box-shadow:inset 0 0 0 1px rgba(255,255,255,.55);"></div>
<svg style="left:941px;top:230px" width="110" height="18" viewBox="0 0 110 18" ><rect x="10.500" y="9.500" width="10" height="3" rx="1" fill="#fff" stroke="#49566b" stroke-width="1"/><rect x="45" y="4.500" width="9" height="8" rx="1" fill="#fff" stroke="#49566b" stroke-width="1"/><rect x="48" y="7.500" width="3" height="2" fill="#9bb7d8" stroke="#49566b" stroke-width="1"/><path d="M79.500 4.500l10 8M89.500 4.500l-10 8" stroke="#5a2a22" stroke-width="4.200" fill="none"/><path d="M79.500 4.500l10 8M89.500 4.500l-10 8" stroke="#fff" stroke-width="2.400" fill="none"/></svg>
<div style="left:70px;top:251px;width:973px;height:292px;background:#f0f6fb;"></div>
<div style="left:96px;top:254px;width:942px;height:8px;background:#c8c8c8;"></div>
<div style="left:96px;top:254px;width:942px;height:1px;background:#000;"></div>
<div style="left:96px;top:254px;width:1px;height:8px;background:#000;"></div>
<div style="left:1037px;top:254px;width:1px;height:3px;background:#000;"></div>
<span class="t " style="left:96.00px;top:258.89px;font-size:11px;letter-spacing:0.116px;color:#000;">00:00:00:000</span>
<span class="t " style="left:231.00px;top:258.89px;font-size:11px;letter-spacing:0.116px;color:#000;">00:00:03:038</span>
<span class="t " style="left:366.00px;top:258.89px;font-size:11px;letter-spacing:0.116px;color:#000;">00:00:06:076</span>
<span class="t " style="left:501.00px;top:258.89px;font-size:11px;letter-spacing:0.190px;color:#000;">00:00:09:115</span>
<span class="t " style="left:636.00px;top:258.89px;font-size:11px;letter-spacing:0.116px;color:#000;">00:00:12:153</span>
<span class="t " style="left:771.00px;top:258.89px;font-size:11px;letter-spacing:0.116px;color:#000;">00:00:15:192</span>
<span class="t " style="left:906.00px;top:258.89px;font-size:11px;letter-spacing:0.116px;color:#000;">00:00:18:230</span>
<span class="t " style="left:73.00px;top:282.19px;font-size:11px;color:#000;">-3</span>
<span class="t " style="left:73.00px;top:396.19px;font-size:11px;color:#000;">-3</span>
<span class="t " style="left:73.00px;top:296.44px;font-size:11px;color:#000;">-6</span>
<span class="t " style="left:73.00px;top:410.44px;font-size:11px;color:#000;">-6</span>
<span class="t " style="left:73.00px;top:310.69px;font-size:11px;color:#000;">-12</span>
<span class="t " style="left:73.00px;top:424.69px;font-size:11px;color:#000;">-12</span>
<span class="t " style="left:73.00px;top:324.94px;font-size:11px;color:#000;">-dB</span>
<span class="t " style="left:73.00px;top:438.94px;font-size:11px;color:#000;">-dB</span>
<span class="t " style="left:73.00px;top:339.19px;font-size:11px;color:#000;">-12</span>
<span class="t " style="left:73.00px;top:453.19px;font-size:11px;color:#000;">-12</span>
<span class="t " style="left:73.00px;top:353.44px;font-size:11px;color:#000;">-6</span>
<span class="t " style="left:73.00px;top:467.44px;font-size:11px;color:#000;">-6</span>
<span class="t " style="left:73.00px;top:367.69px;font-size:11px;color:#000;">-3</span>
<span class="t " style="left:73.00px;top:481.69px;font-size:11px;color:#000;">-3</span>
<div style="left:70px;top:391px;width:28px;height:1px;background:#c0c0c0;"></div>
<div style="left:97px;top:276px;width:945px;height:1px;background:#707070;"></div>
<div style="left:97px;top:277px;width:655px;height:228px;background:#fff;"></div>
<div style="left:752px;top:277px;width:290px;height:228px;background:#c8c8c8;"></div>
<div style="left:97px;top:277px;width:1px;height:246px;background:#808080;"></div>
<svg style="left:0px;top:0px" width="1241" height="724" viewBox="0 0 1241 724" ><g class="cr"><rect x="98" y="305" width="654" height="1" fill="#b4b4b4"/><rect x="752" y="305" width="290" height="1" fill="#fff"/><rect x="98" y="334" width="654" height="1" fill="#b4b4b4"/><rect x="752" y="334" width="290" height="1" fill="#fff"/><rect x="98" y="362" width="654" height="1" fill="#b4b4b4"/><rect x="752" y="362" width="290" height="1" fill="#fff"/><rect x="98" y="419" width="654" height="1" fill="#b4b4b4"/><rect x="752" y="419" width="290" height="1" fill="#fff"/><rect x="98" y="448" width="654" height="1" fill="#b4b4b4"/><rect x="752" y="448" width="290" height="1" fill="#fff"/><rect x="98" y="476" width="654" height="1" fill="#b4b4b4"/><rect x="752" y="476" width="290" height="1" fill="#fff"/><rect x="98" y="391" width="654" height="1" fill="#0a0a64"/><rect x="752" y="391" width="290" height="1" fill="#fff"/><rect x="100" y="334" width="652" height="1" fill="#0a0a64"/><rect x="100" y="448" width="652" height="1" fill="#0a0a64"/><g fill="#0a0a64"><rect x="284" y="438" width="1" height="35"/><rect x="298" y="446" width="1" height="5"/><rect x="299" y="444" width="1" height="8"/><rect x="300" y="445" width="1" height="8"/><rect x="301" y="447" width="1" height="4"/><rect x="302" y="445" width="1" height="6"/><rect x="303" y="442" width="1" height="12"/><rect x="304" y="441" width="1" height="15"/><rect x="305" y="441" width="1" height="13"/><rect x="306" y="442" width="1" height="12"/><rect x="307" y="445" width="1" height="7"/><rect x="308" y="445" width="1" height="6"/><rect x="309" y="443" width="1" height="10"/><rect x="310" y="444" width="1" height="10"/><rect x="311" y="445" width="1" height="6"/><rect x="312" y="444" width="1" height="9"/><rect x="313" y="440" width="1" height="16"/><rect x="314" y="433" width="1" height="30"/><rect x="315" y="442" width="1" height="14"/><rect x="316" y="443" width="1" height="9"/><rect x="317" y="446" width="1" height="4"/><rect x="318" y="444" width="1" height="7"/><rect x="319" y="444" width="1" height="9"/><rect x="320" y="443" width="1" height="10"/><rect x="321" y="442" width="1" height="11"/><rect x="322" y="443" width="1" height="11"/><rect x="323" y="443" width="1" height="11"/><rect x="324" y="443" width="1" height="10"/><rect x="325" y="445" width="1" height="7"/><rect x="326" y="446" width="1" height="5"/><rect x="352" y="442" width="1" height="10"/><rect x="353" y="439" width="1" height="14"/><rect x="354" y="442" width="1" height="11"/><rect x="356" y="442" width="1" height="10"/><rect x="357" y="435" width="1" height="22"/><rect x="358" y="442" width="1" height="12"/><rect x="360" y="443" width="1" height="9"/><rect x="361" y="438" width="1" height="18"/><rect x="362" y="437" width="1" height="22"/><rect x="363" y="438" width="1" height="17"/><rect x="364" y="438" width="1" height="17"/><rect x="365" y="442" width="1" height="12"/><rect x="367" y="443" width="1" height="10"/><rect x="368" y="438" width="1" height="15"/><rect x="369" y="437" width="1" height="20"/><rect x="370" y="439" width="1" height="16"/><rect x="371" y="438" width="1" height="15"/><rect x="372" y="444" width="1" height="9"/><rect x="375" y="442" width="1" height="14"/><rect x="376" y="434" width="1" height="25"/><rect x="377" y="436" width="1" height="25"/><rect x="378" y="441" width="1" height="14"/><rect x="380" y="444" width="1" height="8"/><rect x="381" y="442" width="1" height="11"/><rect x="382" y="441" width="1" height="14"/><rect x="383" y="441" width="1" height="13"/><rect x="384" y="438" width="1" height="17"/><rect x="385" y="440" width="1" height="16"/><rect x="386" y="441" width="1" height="13"/><rect x="387" y="442" width="1" height="11"/><rect x="388" y="444" width="1" height="8"/><rect x="390" y="443" width="1" height="10"/><rect x="391" y="439" width="1" height="16"/><rect x="392" y="438" width="1" height="20"/><rect x="393" y="439" width="1" height="20"/><rect x="394" y="431" width="1" height="37"/><rect x="395" y="441" width="1" height="15"/><rect x="396" y="443" width="1" height="9"/><rect x="397" y="445" width="1" height="7"/><rect x="398" y="443" width="1" height="11"/><rect x="399" y="443" width="1" height="13"/><rect x="400" y="441" width="1" height="13"/><rect x="401" y="440" width="1" height="17"/><rect x="402" y="441" width="1" height="18"/><rect x="403" y="440" width="1" height="16"/><rect x="404" y="439" width="1" height="18"/><rect x="405" y="440" width="1" height="19"/><rect x="406" y="442" width="1" height="14"/><rect x="407" y="441" width="1" height="14"/><rect x="408" y="442" width="1" height="14"/><rect x="409" y="444" width="1" height="10"/><rect x="410" y="445" width="1" height="7"/><rect x="413" y="443" width="1" height="9"/><rect x="414" y="436" width="1" height="18"/><rect x="415" y="434" width="1" height="23"/><rect x="416" y="438" width="1" height="17"/><rect x="417" y="436" width="1" height="19"/><rect x="418" y="441" width="1" height="12"/><rect x="419" y="445" width="1" height="5"/><rect x="420" y="441" width="1" height="10"/><rect x="421" y="441" width="1" height="12"/><rect x="422" y="440" width="1" height="12"/><rect x="423" y="439" width="1" height="13"/><rect x="424" y="443" width="1" height="9"/><rect x="425" y="444" width="1" height="7"/><rect x="427" y="434" width="1" height="29"/><rect x="430" y="445" width="1" height="7"/><rect x="431" y="441" width="1" height="11"/><rect x="432" y="440" width="1" height="15"/><rect x="433" y="440" width="1" height="14"/><rect x="434" y="440" width="1" height="13"/><rect x="435" y="443" width="1" height="10"/><rect x="436" y="444" width="1" height="7"/><rect x="438" y="445" width="1" height="6"/><rect x="439" y="443" width="1" height="9"/><rect x="440" y="442" width="1" height="12"/><rect x="441" y="441" width="1" height="13"/><rect x="442" y="440" width="1" height="14"/><rect x="443" y="442" width="1" height="13"/><rect x="444" y="441" width="1" height="13"/><rect x="445" y="441" width="1" height="13"/><rect x="446" y="443" width="1" height="11"/><rect x="447" y="445" width="1" height="7"/><rect x="448" y="445" width="1" height="6"/><rect x="449" y="446" width="1" height="5"/><rect x="450" y="443" width="1" height="9"/><rect x="451" y="444" width="1" height="10"/><rect x="452" y="441" width="1" height="13"/><rect x="453" y="440" width="1" height="13"/><rect x="454" y="441" width="1" height="14"/><rect x="455" y="443" width="1" height="10"/><rect x="456" y="441" width="1" height="12"/><rect x="457" y="443" width="1" height="11"/><rect x="458" y="444" width="1" height="7"/><rect x="459" y="445" width="1" height="6"/><rect x="460" y="430" width="1" height="35"/><rect x="463" y="445" width="1" height="6"/><rect x="464" y="442" width="1" height="11"/><rect x="465" y="443" width="1" height="12"/><rect x="466" y="441" width="1" height="13"/><rect x="467" y="438" width="1" height="17"/><rect x="468" y="440" width="1" height="16"/><rect x="469" y="441" width="1" height="13"/><rect x="470" y="440" width="1" height="14"/><rect x="471" y="442" width="1" height="11"/><rect x="472" y="445" width="1" height="6"/><rect x="473" y="446" width="1" height="4"/><rect x="474" y="444" width="1" height="7"/><rect x="475" y="443" width="1" height="9"/><rect x="476" y="443" width="1" height="9"/><rect x="477" y="442" width="1" height="10"/><rect x="478" y="438" width="1" height="15"/><rect x="479" y="444" width="1" height="7"/><rect x="480" y="444" width="1" height="7"/><rect x="481" y="446" width="1" height="4"/><rect x="483" y="442" width="1" height="10"/><rect x="484" y="436" width="1" height="18"/><rect x="485" y="435" width="1" height="21"/><rect x="486" y="439" width="1" height="15"/><rect x="487" y="441" width="1" height="11"/><rect x="488" y="447" width="1" height="3"/><rect x="489" y="446" width="1" height="5"/><rect x="490" y="445" width="1" height="7"/><rect x="491" y="446" width="1" height="6"/><rect x="492" y="445" width="1" height="6"/><rect x="493" y="446" width="1" height="5"/><rect x="494" y="447" width="1" height="3"/><rect x="495" y="440" width="1" height="12"/><rect x="496" y="435" width="1" height="21"/><rect x="497" y="436" width="1" height="22"/><rect x="498" y="432" width="1" height="26"/><rect x="499" y="431" width="1" height="26"/><rect x="500" y="436" width="1" height="20"/><rect x="501" y="440" width="1" height="13"/><rect x="502" y="447" width="1" height="3"/><rect x="503" y="446" width="1" height="5"/><rect x="504" y="447" width="1" height="3"/><rect x="505" y="445" width="1" height="6"/><rect x="506" y="443" width="1" height="9"/><rect x="507" y="443" width="1" height="11"/><rect x="508" y="441" width="1" height="12"/><rect x="509" y="440" width="1" height="14"/><rect x="510" y="442" width="1" height="13"/><rect x="511" y="443" width="1" height="11"/><rect x="512" y="442" width="1" height="11"/><rect x="513" y="443" width="1" height="10"/><rect x="514" y="445" width="1" height="6"/><rect x="516" y="444" width="1" height="7"/><rect x="517" y="442" width="1" height="11"/><rect x="518" y="440" width="1" height="14"/><rect x="519" y="441" width="1" height="14"/><rect x="520" y="437" width="1" height="18"/><rect x="521" y="439" width="1" height="17"/><rect x="522" y="440" width="1" height="14"/><rect x="523" y="438" width="1" height="16"/><rect x="524" y="442" width="1" height="12"/><rect x="525" y="442" width="1" height="11"/><rect x="526" y="444" width="1" height="8"/><rect x="528" y="424" width="1" height="49"/><rect x="529" y="444" width="1" height="8"/><rect x="530" y="441" width="1" height="11"/><rect x="531" y="442" width="1" height="12"/><rect x="532" y="439" width="1" height="14"/><rect x="533" y="436" width="1" height="18"/><rect x="534" y="438" width="1" height="18"/><rect x="535" y="437" width="1" height="20"/><rect x="536" y="431" width="1" height="26"/><rect x="537" y="433" width="1" height="26"/><rect x="538" y="431" width="1" height="26"/><rect x="539" y="432" width="1" height="24"/><rect x="540" y="435" width="1" height="21"/><rect x="541" y="437" width="1" height="18"/><rect x="542" y="438" width="1" height="15"/><rect x="543" y="442" width="1" height="11"/><rect x="544" y="443" width="1" height="9"/><rect x="562" y="446" width="1" height="4"/><rect x="563" y="445" width="1" height="6"/><rect x="564" y="446" width="1" height="6"/><rect x="565" y="446" width="1" height="5"/><rect x="566" y="442" width="1" height="12"/><rect x="567" y="435" width="1" height="21"/><rect x="568" y="436" width="1" height="22"/><rect x="569" y="443" width="1" height="11"/><rect x="570" y="442" width="1" height="10"/><rect x="571" y="435" width="1" height="20"/><rect x="572" y="438" width="1" height="20"/><rect x="573" y="435" width="1" height="21"/><rect x="574" y="435" width="1" height="20"/><rect x="575" y="440" width="1" height="13"/><rect x="576" y="446" width="1" height="5"/><rect x="577" y="444" width="1" height="8"/><rect x="578" y="445" width="1" height="8"/><rect x="579" y="446" width="1" height="5"/><rect x="580" y="440" width="1" height="13"/><rect x="581" y="435" width="1" height="21"/><rect x="582" y="436" width="1" height="23"/><rect x="583" y="434" width="1" height="24"/><rect x="584" y="435" width="1" height="21"/><rect x="585" y="440" width="1" height="14"/><rect x="588" y="443" width="1" height="9"/><rect x="589" y="422" width="1" height="44"/><rect x="590" y="434" width="1" height="24"/><rect x="591" y="439" width="1" height="16"/><rect x="592" y="442" width="1" height="11"/><rect x="593" y="445" width="1" height="8"/><rect x="594" y="440" width="1" height="14"/><rect x="595" y="439" width="1" height="19"/><rect x="596" y="440" width="1" height="18"/><rect x="597" y="437" width="1" height="20"/><rect x="598" y="439" width="1" height="19"/><rect x="599" y="440" width="1" height="22"/><rect x="600" y="443" width="1" height="10"/><rect x="602" y="443" width="1" height="10"/><rect x="603" y="438" width="1" height="17"/><rect x="604" y="439" width="1" height="20"/><rect x="605" y="422" width="1" height="51"/><rect x="606" y="434" width="1" height="27"/><rect x="607" y="439" width="1" height="18"/><rect x="608" y="443" width="1" height="10"/><rect x="611" y="443" width="1" height="9"/><rect x="612" y="439" width="1" height="14"/><rect x="613" y="440" width="1" height="15"/><rect x="614" y="439" width="1" height="14"/><rect x="615" y="434" width="1" height="21"/><rect x="616" y="438" width="1" height="18"/><rect x="617" y="438" width="1" height="17"/><rect x="618" y="437" width="1" height="17"/><rect x="619" y="441" width="1" height="12"/><rect x="620" y="443" width="1" height="8"/><rect x="621" y="443" width="1" height="9"/><rect x="622" y="439" width="1" height="14"/><rect x="623" y="438" width="1" height="17"/><rect x="624" y="436" width="1" height="20"/><rect x="625" y="434" width="1" height="21"/><rect x="626" y="436" width="1" height="21"/><rect x="627" y="437" width="1" height="19"/><rect x="628" y="437" width="1" height="17"/><rect x="629" y="440" width="1" height="14"/><rect x="630" y="443" width="1" height="9"/><rect x="631" y="444" width="1" height="9"/><rect x="632" y="437" width="1" height="18"/><rect x="633" y="437" width="1" height="21"/><rect x="634" y="438" width="1" height="18"/><rect x="635" y="437" width="1" height="18"/><rect x="636" y="442" width="1" height="11"/><rect x="638" y="442" width="1" height="10"/><rect x="639" y="438" width="1" height="14"/><rect x="640" y="436" width="1" height="19"/><rect x="641" y="438" width="1" height="16"/><rect x="642" y="433" width="1" height="21"/><rect x="643" y="437" width="1" height="18"/><rect x="644" y="440" width="1" height="14"/><rect x="645" y="441" width="1" height="10"/><rect x="666" y="446" width="1" height="5"/><rect x="667" y="445" width="1" height="7"/><rect x="668" y="444" width="1" height="9"/><rect x="669" y="444" width="1" height="9"/><rect x="670" y="445" width="1" height="7"/><rect x="671" y="446" width="1" height="5"/><rect x="672" y="444" width="1" height="8"/><rect x="673" y="439" width="1" height="15"/><rect x="674" y="427" width="1" height="33"/><rect x="675" y="443" width="1" height="10"/><rect x="676" y="446" width="1" height="6"/><rect x="677" y="444" width="1" height="8"/><rect x="678" y="442" width="1" height="13"/><rect x="679" y="438" width="1" height="22"/><rect x="680" y="441" width="1" height="13"/><rect x="681" y="442" width="1" height="15"/><rect x="682" y="441" width="1" height="14"/><rect x="683" y="440" width="1" height="15"/><rect x="684" y="441" width="1" height="16"/><rect x="685" y="442" width="1" height="12"/><rect x="686" y="441" width="1" height="13"/><rect x="687" y="443" width="1" height="12"/><rect x="688" y="445" width="1" height="8"/><rect x="689" y="444" width="1" height="8"/><rect x="690" y="446" width="1" height="6"/><rect x="691" y="444" width="1" height="8"/><rect x="692" y="439" width="1" height="14"/><rect x="693" y="439" width="1" height="18"/><rect x="694" y="440" width="1" height="18"/><rect x="695" y="437" width="1" height="18"/><rect x="696" y="437" width="1" height="24"/><rect x="697" y="442" width="1" height="13"/><rect x="699" y="444" width="1" height="7"/><rect x="700" y="438" width="1" height="15"/><rect x="701" y="436" width="1" height="20"/><rect x="702" y="434" width="1" height="21"/><rect x="703" y="435" width="1" height="20"/><rect x="704" y="438" width="1" height="17"/><rect x="705" y="443" width="1" height="8"/><rect x="706" y="444" width="1" height="9"/><rect x="707" y="441" width="1" height="12"/><rect x="708" y="438" width="1" height="24"/><rect x="709" y="441" width="1" height="14"/><rect x="710" y="439" width="1" height="17"/><rect x="711" y="441" width="1" height="14"/><rect x="712" y="443" width="1" height="9"/><rect x="715" y="446" width="1" height="5"/><rect x="716" y="444" width="1" height="7"/><rect x="717" y="444" width="1" height="10"/><rect x="718" y="443" width="1" height="9"/><rect x="719" y="443" width="1" height="10"/><rect x="720" y="445" width="1" height="8"/><rect x="721" y="446" width="1" height="5"/><rect x="314" y="324" width="1" height="31"/><rect x="376" y="314" width="1" height="47"/><rect x="377" y="323" width="1" height="25"/><rect x="393" y="322" width="1" height="27"/><rect x="394" y="312" width="1" height="51"/><rect x="395" y="322" width="1" height="40"/><rect x="501" y="333" width="1" height="3"/><rect x="502" y="332" width="1" height="5"/><rect x="503" y="333" width="1" height="3"/><rect x="505" y="331" width="1" height="6"/><rect x="506" y="328" width="1" height="11"/><rect x="507" y="327" width="1" height="14"/><rect x="508" y="327" width="1" height="13"/><rect x="509" y="325" width="1" height="16"/><rect x="510" y="328" width="1" height="14"/><rect x="511" y="328" width="1" height="13"/><rect x="512" y="328" width="1" height="10"/><rect x="513" y="330" width="1" height="8"/><rect x="516" y="328" width="1" height="11"/><rect x="517" y="323" width="1" height="22"/><rect x="518" y="326" width="1" height="19"/><rect x="519" y="327" width="1" height="14"/><rect x="521" y="329" width="1" height="12"/><rect x="522" y="323" width="1" height="20"/><rect x="523" y="325" width="1" height="21"/><rect x="524" y="324" width="1" height="20"/><rect x="525" y="327" width="1" height="12"/><rect x="527" y="330" width="1" height="9"/><rect x="528" y="320" width="1" height="29"/><rect x="529" y="330" width="1" height="10"/><rect x="531" y="329" width="1" height="9"/><rect x="532" y="324" width="1" height="14"/><rect x="533" y="322" width="1" height="18"/><rect x="534" y="323" width="1" height="17"/><rect x="535" y="317" width="1" height="23"/><rect x="536" y="315" width="1" height="29"/><rect x="537" y="314" width="1" height="30"/><rect x="538" y="309" width="1" height="36"/><rect x="539" y="316" width="1" height="29"/><rect x="540" y="321" width="1" height="20"/><rect x="541" y="317" width="1" height="25"/><rect x="542" y="324" width="1" height="17"/><rect x="543" y="324" width="1" height="16"/><rect x="544" y="326" width="1" height="12"/><rect x="562" y="333" width="1" height="3"/><rect x="563" y="331" width="1" height="6"/><rect x="564" y="331" width="1" height="7"/><rect x="565" y="332" width="1" height="6"/><rect x="566" y="332" width="1" height="4"/><rect x="567" y="324" width="1" height="16"/><rect x="568" y="315" width="1" height="29"/><rect x="569" y="327" width="1" height="13"/><rect x="570" y="328" width="1" height="10"/><rect x="571" y="321" width="1" height="18"/><rect x="572" y="320" width="1" height="23"/><rect x="573" y="323" width="1" height="17"/><rect x="574" y="321" width="1" height="19"/><rect x="575" y="328" width="1" height="11"/><rect x="576" y="332" width="1" height="6"/><rect x="577" y="329" width="1" height="10"/><rect x="578" y="331" width="1" height="9"/><rect x="579" y="332" width="1" height="5"/><rect x="580" y="326" width="1" height="13"/><rect x="581" y="320" width="1" height="24"/><rect x="582" y="320" width="1" height="26"/><rect x="583" y="323" width="1" height="21"/><rect x="584" y="320" width="1" height="23"/><rect x="585" y="328" width="1" height="12"/><rect x="587" y="332" width="1" height="5"/><rect x="588" y="323" width="1" height="19"/><rect x="589" y="300" width="1" height="60"/><rect x="590" y="315" width="1" height="33"/><rect x="591" y="323" width="1" height="20"/><rect x="592" y="330" width="1" height="9"/><rect x="593" y="328" width="1" height="12"/><rect x="594" y="328" width="1" height="15"/><rect x="595" y="325" width="1" height="19"/><rect x="596" y="324" width="1" height="20"/><rect x="597" y="325" width="1" height="20"/><rect x="598" y="327" width="1" height="16"/><rect x="599" y="321" width="1" height="27"/><rect x="600" y="331" width="1" height="8"/><rect x="601" y="328" width="1" height="11"/><rect x="602" y="324" width="1" height="18"/><rect x="603" y="322" width="1" height="23"/><rect x="604" y="324" width="1" height="20"/><rect x="605" y="319" width="1" height="28"/><rect x="606" y="308" width="1" height="50"/><rect x="607" y="325" width="1" height="17"/><rect x="608" y="327" width="1" height="12"/><rect x="609" y="332" width="1" height="5"/><rect x="610" y="331" width="1" height="7"/><rect x="611" y="332" width="1" height="5"/><rect x="612" y="328" width="1" height="11"/><rect x="613" y="324" width="1" height="16"/><rect x="614" y="325" width="1" height="18"/><rect x="615" y="320" width="1" height="22"/><rect x="616" y="319" width="1" height="24"/><rect x="617" y="321" width="1" height="23"/><rect x="618" y="322" width="1" height="19"/><rect x="619" y="324" width="1" height="16"/><rect x="620" y="329" width="1" height="10"/><rect x="621" y="329" width="1" height="10"/><rect x="622" y="325" width="1" height="15"/><rect x="623" y="324" width="1" height="21"/><rect x="624" y="324" width="1" height="21"/><rect x="625" y="319" width="1" height="24"/><rect x="626" y="322" width="1" height="25"/><rect x="627" y="325" width="1" height="18"/><rect x="628" y="322" width="1" height="20"/><rect x="629" y="327" width="1" height="15"/><rect x="630" y="329" width="1" height="10"/><rect x="631" y="330" width="1" height="10"/><rect x="632" y="326" width="1" height="17"/><rect x="633" y="328" width="1" height="18"/><rect x="634" y="327" width="1" height="17"/><rect x="635" y="326" width="1" height="17"/><rect x="636" y="330" width="1" height="10"/><rect x="638" y="328" width="1" height="10"/><rect x="639" y="323" width="1" height="17"/><rect x="640" y="322" width="1" height="22"/><rect x="641" y="319" width="1" height="24"/><rect x="642" y="318" width="1" height="26"/><rect x="643" y="323" width="1" height="21"/><rect x="644" y="324" width="1" height="17"/><rect x="645" y="327" width="1" height="12"/><rect x="661" y="332" width="1" height="4"/><rect x="666" y="332" width="1" height="5"/><rect x="667" y="330" width="1" height="8"/><rect x="668" y="330" width="1" height="10"/><rect x="669" y="330" width="1" height="10"/><rect x="670" y="330" width="1" height="8"/><rect x="671" y="332" width="1" height="5"/><rect x="672" y="327" width="1" height="12"/><rect x="673" y="323" width="1" height="20"/><rect x="674" y="305" width="1" height="42"/><rect x="675" y="318" width="1" height="23"/><rect x="676" y="329" width="1" height="10"/><rect x="677" y="324" width="1" height="18"/><rect x="678" y="325" width="1" height="20"/><rect x="679" y="324" width="1" height="19"/><rect x="680" y="316" width="1" height="35"/><rect x="681" y="329" width="1" height="11"/><rect x="682" y="332" width="1" height="5"/><rect x="683" y="330" width="1" height="9"/><rect x="684" y="329" width="1" height="11"/><rect x="685" y="330" width="1" height="9"/><rect x="686" y="328" width="1" height="12"/><rect x="687" y="329" width="1" height="12"/><rect x="688" y="330" width="1" height="9"/><rect x="689" y="330" width="1" height="8"/><rect x="690" y="332" width="1" height="6"/><rect x="691" y="328" width="1" height="11"/><rect x="692" y="323" width="1" height="19"/><rect x="693" y="323" width="1" height="22"/><rect x="694" y="321" width="1" height="23"/><rect x="695" y="321" width="1" height="22"/><rect x="696" y="325" width="1" height="18"/><rect x="697" y="328" width="1" height="11"/><rect x="699" y="327" width="1" height="12"/><rect x="700" y="315" width="1" height="26"/><rect x="701" y="314" width="1" height="29"/><rect x="702" y="318" width="1" height="23"/><rect x="703" y="323" width="1" height="15"/><rect x="704" y="328" width="1" height="10"/><rect x="705" y="324" width="1" height="18"/><rect x="706" y="325" width="1" height="19"/><rect x="707" y="321" width="1" height="22"/><rect x="708" y="315" width="1" height="38"/><rect x="709" y="324" width="1" height="18"/><rect x="710" y="329" width="1" height="10"/><rect x="711" y="331" width="1" height="6"/><rect x="712" y="329" width="1" height="10"/><rect x="713" y="331" width="1" height="7"/><rect x="715" y="332" width="1" height="5"/><rect x="716" y="329" width="1" height="10"/><rect x="717" y="330" width="1" height="10"/><rect x="718" y="327" width="1" height="14"/><rect x="719" y="327" width="1" height="12"/><rect x="720" y="328" width="1" height="12"/><rect x="721" y="330" width="1" height="9"/><rect x="722" y="331" width="1" height="6"/></g><rect x="98" y="277" width="2" height="228" fill="#10107a"/></g></svg>
<div style="left:98px;top:505px;width:944px;height:1px;background:#fff;"></div>
<div style="left:98px;top:506px;width:944px;height:16px;background:#f0f0f0;"></div>
<div style="left:116px;top:506px;width:908px;height:15px;background:#cdcdcd;"></div>
<div style="left:98px;top:522px;width:944px;height:1px;background:#e4e4e4;"></div>
<svg style="left:98px;top:506px" width="944" height="16" viewBox="0 0 944 16" ><path d="M11 4.500l-3.500 3.500 3.500 3.500" fill="none" stroke="#505050" stroke-width="1.800"/><path d="M933 4.500l3.500 3.500-3.500 3.500" fill="none" stroke="#505050" stroke-width="1.800"/></svg>
<span class="t " style="left:72.50px;top:524.54px;font-size:12px;letter-spacing:-0.337px;color:#000;">File loaded in 0.076s!</span>
<div style="left:497px;top:526px;width:34px;height:16px;background:transparent;box-sizing:border-box;border:1px solid;border-color:#a0a0a0 #fff #fff #a0a0a0;"></div>
<span class="t " style="left:500.50px;top:524.54px;font-size:12px;letter-spacing:-0.231px;color:#000;">16 bit</span>
<div style="left:535px;top:526px;width:55px;height:16px;background:transparent;box-sizing:border-box;border:1px solid;border-color:#a0a0a0 #fff #fff #a0a0a0;"></div>
<span class="t " style="left:537.70px;top:525.06px;font-size:10.5px;letter-spacing:-0.895px;color:#000;">STEREO</span>
<div style="left:593px;top:526px;width:58px;height:16px;background:transparent;box-sizing:border-box;border:1px solid;border-color:#a0a0a0 #fff #fff #a0a0a0;"></div>
<span class="t " style="left:595.50px;top:524.54px;font-size:12px;letter-spacing:-0.696px;color:#000;">44100 Hz</span>
<div style="left:653px;top:526px;width:149px;height:16px;background:transparent;box-sizing:border-box;border:1px solid;border-color:#a0a0a0 #fff #fff #a0a0a0;"></div>
<span class="t " style="left:656.30px;top:524.68px;font-size:11.6px;letter-spacing:-0.349px;color:#000;">00:00:00:000 - 00:00:00:000</span>
<div style="left:806px;top:526px;width:89px;height:16px;background:transparent;box-sizing:border-box;border:1px solid;border-color:#a0a0a0 #fff #fff #a0a0a0;"></div>
<span class="t " style="left:808.50px;top:524.68px;font-size:11.6px;letter-spacing:-0.289px;color:#000;">d=00:00:00:000</span>
<div style="left:898px;top:526px;width:78px;height:16px;background:transparent;box-sizing:border-box;border:1px solid;border-color:#a0a0a0 #fff #fff #a0a0a0;"></div>
<span class="t " style="left:900.50px;top:524.68px;font-size:11.6px;letter-spacing:-0.476px;color:#000;">00:00:00:000</span>
<div style="left:978px;top:526px;width:64px;height:16px;background:transparent;box-sizing:border-box;border:1px solid;border-color:#a0a0a0 #fff #fff #a0a0a0;"></div>
<span class="t " style="left:981.50px;top:524.68px;font-size:11.6px;letter-spacing:-0.796px;color:#000;">1:1024</span>
<svg style="left:1024px;top:526px" width="18" height="16" viewBox="0 0 18 16" ><rect x="0" y="1" width="18" height="15" fill="#f0f0f0"/><path d="M7 16L18 5M11 16L18 9M15 16L18 13" stroke="#a0a0a0" stroke-width="1.200" fill="none"/><path d="M8 16L18 6M12 16L18 10M16 16L18 14" stroke="#fff" stroke-width="1" fill="none"/></svg>
<div style="left:0px;top:681px;width:1241px;height:25px;background:#fff;"></div>
<div style="left:0px;top:681px;width:1241px;height:1px;background:#e8e8e8;"></div>
<div style="left:0px;top:682px;width:186px;height:23px;background:#f0f0f0;"></div>
<div style="left:187px;top:682px;width:335px;height:23px;background:#f0f0f0;"></div>
<div style="left:0px;top:705px;width:1241px;height:1px;background:#a0a0a0;"></div>
<div style="left:185px;top:682px;width:1px;height:22px;background:#a0a0a0;"></div>
<div style="left:186px;top:682px;width:1px;height:22px;background:#fff;"></div>
<div style="left:521px;top:682px;width:1px;height:22px;background:#a0a0a0;"></div>
<svg style="left:0px;top:0px" width="1241" height="724" viewBox="0 0 1241 724" ><rect x="2" y="685" width="1" height="1" fill="#b4b4b4"/><rect x="1" y="686" width="2" height="1" fill="#b4b4b4"/><rect x="2" y="690" width="1" height="1" fill="#b4b4b4"/><rect x="1" y="691" width="2" height="1" fill="#b4b4b4"/><rect x="2" y="695" width="1" height="1" fill="#b4b4b4"/><rect x="1" y="696" width="2" height="1" fill="#b4b4b4"/><rect x="2" y="700" width="1" height="1" fill="#b4b4b4"/><rect x="1" y="701" width="2" height="1" fill="#b4b4b4"/><rect x="189" y="684" width="2" height="19" fill="#fff"/><rect x="191" y="684" width="1" height="20" fill="#a0a0a0"/><rect x="189" y="703" width="3" height="1" fill="#a0a0a0"/><rect x="54" y="685" width="1" height="18" fill="#a0a0a0"/><rect x="55" y="685" width="1" height="18" fill="#fff"/><rect x="83" y="685" width="1" height="18" fill="#a0a0a0"/><rect x="84" y="685" width="1" height="18" fill="#fff"/><rect x="135" y="685" width="1" height="18" fill="#a0a0a0"/><rect x="136" y="685" width="1" height="18" fill="#fff"/><circle cx="20" cy="690.8" r="4.400" fill="#fff" stroke="#000" stroke-width="1.300"/><path d="M16.4 694.4l-5.500 4.300" stroke="#000" stroke-width="2.300" fill="none"/><path class="cr" d="M17.5 690.8h5M20 688.3v5" stroke="#000" stroke-width="2" fill="none"/><circle cx="43" cy="690.8" r="4.400" fill="#fff" stroke="#000" stroke-width="1.300"/><path d="M39.4 694.4l-5.500 4.300" stroke="#000" stroke-width="2.300" fill="none"/><path class="cr" d="M40.5 690.8h5" stroke="#000" stroke-width="2" fill="none"/><circle cx="72" cy="690" r="4.400" fill="#fff" stroke="#000" stroke-width="1.300"/><path d="M68.4 693.6l-5.500 4.300" stroke="#000" stroke-width="2.300" fill="none"/><path d="M69.8 689.2a2.600 2.600 0 0 1 2.400-1.800" stroke="#0000a0" stroke-width="1" fill="none"/><path class="cr" d="M69.500 697v4M77.500 697v4" stroke="#000" stroke-width="1" fill="none"/><rect class="cr" x="69" y="698" width="9" height="2" fill="#000"/><circle cx="101" cy="690.2" r="4.400" fill="#fff" stroke="#000" stroke-width="1.300"/><path d="M97.4 693.8l-5.500 4.300" stroke="#000" stroke-width="2.300" fill="none"/><path d="M98.8 689.4a2.600 2.600 0 0 1 2.400-1.800" stroke="#0000a0" stroke-width="1" fill="none"/><path class="cr" d="M101 698.500h5M103.500 696v5" stroke="#000" fill="none"/><circle cx="124" cy="690.2" r="4.400" fill="#fff" stroke="#000" stroke-width="1.300"/><path d="M120.4 693.8l-5.500 4.300" stroke="#000" stroke-width="2.300" fill="none"/><path d="M121.8 689.4a2.600 2.600 0 0 1 2.400-1.800" stroke="#0000a0" stroke-width="1" fill="none"/><path class="cr" d="M124 698.500h5" stroke="#000" fill="none"/><path d="M143.500 696.500h13M146.500 693.500l-3 3 3 3M153.500 693.500l3 3-3 3" stroke="#000" fill="none"/><path d="M145.500 688l4 4M149.500 688l-4 4" stroke="#000" stroke-width="0.900" fill="none"/><text x="150.300" y="693" font-size="7" font-weight="bold" font-family="Liberation Sans,sans-serif">2</text><path d="M167 696.500h12M170 694l2.500 2.500-2.500 2.500M176 694l-2.500 2.500 2.500 2.500" stroke="#000" fill="none"/><path d="M168 692.500l4-4.500" stroke="#000" stroke-width="0.900" fill="none"/><text x="173" y="693" font-size="7" font-weight="bold" font-family="Liberation Sans,sans-serif">2</text></svg>
<span class="t" style="left:197.00px;top:682.94px;font-size:12.57px;color:#000;transform:scaleX(0.8548);transform-origin:0 0;">Wavosaur needs donators like you ;)</span>
<span class="t" style="left:382.20px;top:682.94px;font-size:12.57px;color:#0000cc;transform:scaleX(0.8962);transform-origin:0 0;text-decoration:underline;">http://www.wavosaur.com</span>
<div style="left:0px;top:706px;width:1241px;height:18px;background:#f0f0f0;"></div>
<div style="left:0px;top:706px;width:1241px;height:1px;background:#fff;"></div>
<span class="t " style="left:1.60px;top:708.14px;font-size:12px;letter-spacing:0.148px;color:#000;">Convert to mono with only left channel information</span>
<div style="left:1124px;top:709px;width:28px;height:15px;background:transparent;box-sizing:border-box;border:1px solid;border-color:#a0a0a0 #fff #fff #a0a0a0;"></div>
<div style="left:1155px;top:709px;width:33px;height:15px;background:transparent;box-sizing:border-box;border:1px solid;border-color:#a0a0a0 #fff #fff #a0a0a0;"></div>
<div style="left:1191px;top:709px;width:32px;height:15px;background:transparent;box-sizing:border-box;border:1px solid;border-color:#a0a0a0 #fff #fff #a0a0a0;"></div>
<span class="t " style="left:1158.00px;top:708.14px;font-size:12px;letter-spacing:-0.164px;color:#000;">NUM</span>
<svg style="left:1224px;top:707px" width="17" height="17" viewBox="0 0 17 17" ><path d="M5 17L17 5M9 17L17 9M13 17L17 13" stroke="#a0a0a0" stroke-width="1.300" fill="none"/></svg>
<div style="left:104px;top:47px;width:194px;height:416px;background:#f2f2f2;box-sizing:border-box;border:1px solid #ccc;box-shadow:1.5px 1.5px 2px rgba(0,0,0,.5), 2.5px 2.5px 1px rgba(0,0,0,.12);"></div>
<span class="t " style="left:139.00px;top:51.34px;font-size:12px;letter-spacing:-0.864px;color:#000;">Reverse</span>
<span class="t " style="left:139.00px;top:73.34px;font-size:12px;letter-spacing:0.132px;color:#000;">Invert/Flip</span>
<span class="t " style="left:139.00px;top:95.34px;font-size:12px;letter-spacing:-0.282px;color:#000;">Swap channels</span>
<div style="left:107px;top:116px;width:188px;height:22px;background:#91c9f7;"></div>
<span class="t " style="left:139.00px;top:117.34px;font-size:12px;letter-spacing:0.163px;color:#000;">Convert to mono</span>
<span class="t " style="left:139.00px;top:139.34px;font-size:12px;letter-spacing:-0.065px;color:#000;">Convert to stereo</span>
<span class="t " style="left:139.00px;top:161.34px;font-size:12px;letter-spacing:-0.122px;color:#000;">Channel processing</span>
<div style="left:135px;top:185px;width:160px;height:1px;background:#d7d7d7;"></div>
<span class="t " style="left:139.00px;top:190.34px;font-size:12px;letter-spacing:-0.361px;color:#000;">Resample</span>
<span class="t " style="left:139.00px;top:212.34px;font-size:12px;letter-spacing:0.043px;color:#000;">Bit depth converter</span>
<span class="t " style="left:139.00px;top:234.34px;font-size:12px;letter-spacing:0.098px;color:#000;">Pitch shift</span>
<div style="left:135px;top:258px;width:160px;height:1px;background:#d7d7d7;"></div>
<span class="t " style="left:139.00px;top:263.34px;font-size:12px;letter-spacing:-0.180px;color:#000;">Fade in (linear)</span>
<span class="t " style="left:139.00px;top:285.34px;font-size:12px;letter-spacing:-0.128px;color:#000;">Fade out (linear)</span>
<span class="t " style="left:139.00px;top:307.34px;font-size:12px;letter-spacing:-0.078px;color:#000;">Other fade</span>
<span class="t " style="left:139.00px;top:329.34px;font-size:12px;letter-spacing:0.441px;color:#000;">Mute</span>
<span class="t " style="left:139.00px;top:351.34px;font-size:12px;letter-spacing:-0.002px;color:#000;">Normalize</span>
<span class="t " style="left:139.00px;top:373.34px;font-size:12px;letter-spacing:-0.100px;color:#000;">Vocal remover</span>
<span class="t " style="left:139.00px;top:395.34px;font-size:12px;letter-spacing:-0.005px;color:#000;">Volume</span>
<span class="t " style="left:139.00px;top:417.34px;font-size:12px;letter-spacing:-0.208px;color:#000;">Insert silence</span>
<span class="t " style="left:139.00px;top:439.34px;font-size:12px;letter-spacing:-0.131px;color:#000;">DC remover</span>
<svg style="left:0px;top:0px" width="1241" height="724" viewBox="0 0 1241 724" ><path d="M281.5 123.2l3.800 3.800-3.800 3.800" fill="none" stroke="#3a3a3a" stroke-width="1"/><path d="M281.5 167.2l3.800 3.800-3.800 3.800" fill="none" stroke="#3a3a3a" stroke-width="1"/><path d="M281.5 240.2l3.800 3.800-3.800 3.800" fill="none" stroke="#3a3a3a" stroke-width="1"/><path d="M281.5 313.2l3.800 3.800-3.800 3.800" fill="none" stroke="#3a3a3a" stroke-width="1"/><path d="M281.5 357.2l3.800 3.800-3.800 3.800" fill="none" stroke="#3a3a3a" stroke-width="1"/><path d="M281.5 401.2l3.800 3.800-3.800 3.800" fill="none" stroke="#3a3a3a" stroke-width="1"/><path d="M281.5 423.2l3.800 3.800-3.800 3.800" fill="none" stroke="#3a3a3a" stroke-width="1"/></svg>
<div style="left:292px;top:113px;width:209px;height:240px;background:#f2f2f2;box-sizing:border-box;border:1px solid #ccc;box-shadow:1.5px 1.5px 2px rgba(0,0,0,.5), 2.5px 2.5px 1px rgba(0,0,0,.12);"></div>
<span class="t " style="left:327.00px;top:117.34px;font-size:12px;letter-spacing:0.009px;color:#000;">Mix all channels</span>
<span class="t " style="left:327.00px;top:139.34px;font-size:12px;letter-spacing:-0.025px;color:#000;">Mix all active channels</span>
<div style="left:323px;top:163px;width:175px;height:1px;background:#d7d7d7;"></div>
<div style="left:295px;top:167px;width:203px;height:22px;background:#91c9f7;"></div>
<span class="t " style="left:327.00px;top:168.34px;font-size:12px;letter-spacing:0.080px;color:#000;">Left only</span>
<span class="t " style="left:327.00px;top:190.34px;font-size:12px;letter-spacing:0.071px;color:#000;">Right only</span>
<span class="t " style="left:327.00px;top:212.34px;font-size:12px;letter-spacing:0.013px;color:#000;">Center only</span>
<span class="t " style="left:327.00px;top:234.34px;font-size:12px;letter-spacing:0.010px;color:#000;">Back left only</span>
<span class="t " style="left:327.00px;top:256.34px;font-size:12px;letter-spacing:0.021px;color:#000;">Back right only</span>
<span class="t " style="left:327.00px;top:278.34px;font-size:12px;letter-spacing:0.109px;color:#000;">Auxiliary left only</span>
<span class="t " style="left:327.00px;top:300.34px;font-size:12px;letter-spacing:0.165px;color:#000;">Auxiliary right only</span>
<div style="left:323px;top:324px;width:175px;height:1px;background:#d7d7d7;"></div>
<span class="t " style="left:327.00px;top:329.34px;font-size:12px;letter-spacing:0.131px;color:#6d6d6d;">Custom</span>
<svg style="left:428px;top:177px" width="14" height="21" viewBox="0 0 14 21" ><path d="M0.500 0.500v16l3.700-3.600 2.600 6.100 2.300-1-2.600-6h5.100z" fill="#fff" stroke="#000" stroke-width="1"/></svg>
</div></body></html>
